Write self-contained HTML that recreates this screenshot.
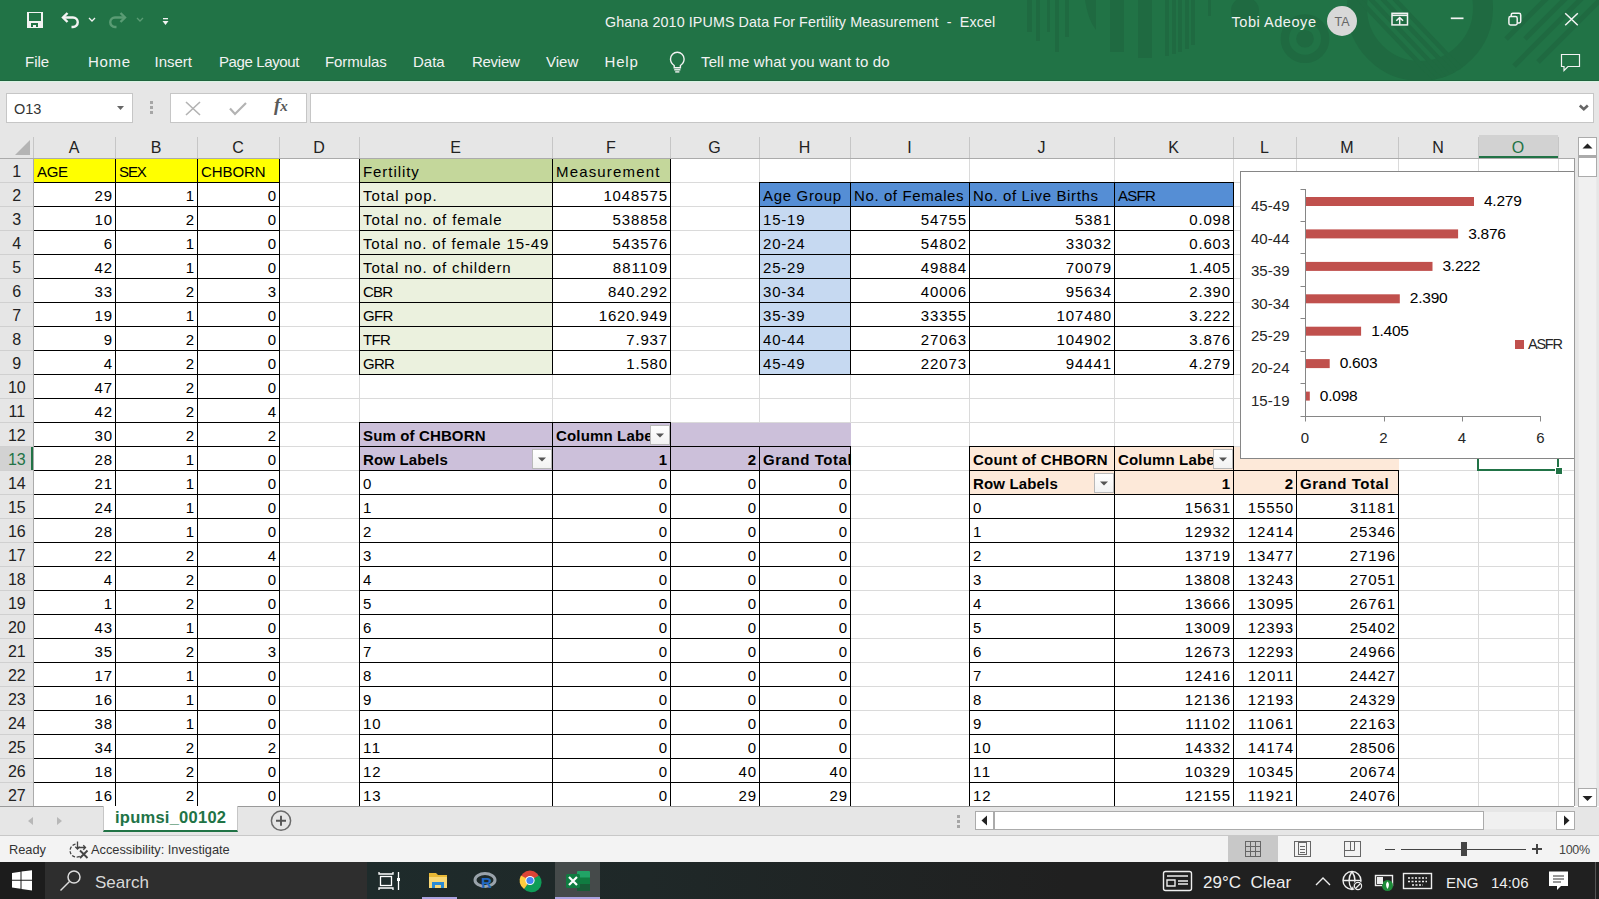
<!DOCTYPE html>
<html><head><meta charset="utf-8"><style>
html,body{margin:0;padding:0;width:1599px;height:899px;overflow:hidden;background:#fff;font-family:"Liberation Sans", sans-serif}
div,span,svg{position:absolute}
.t{white-space:nowrap}
</style></head><body>
<div style="left:0px;top:0px;width:1599px;height:81px;background:#217346;"></div>
<svg style="position:absolute;left:0;top:0" width="1599" height="81"><g fill="#1f6a41"><rect x="1027" y="0" width="5" height="32"/><rect x="1036" y="0" width="4" height="41"/><rect x="1047" y="0" width="3" height="32"/><rect x="1055" y="0" width="4" height="52"/><rect x="1065" y="0" width="4" height="37"/><path d="M1085 0 L1096 0 L1096 30 Q1088 20 1085 0Z"/><rect x="1110" y="0" width="14" height="52"/><rect x="1138" y="0" width="14" height="58"/><rect x="1165" y="0" width="4" height="56"/><rect x="1172" y="0" width="4" height="54"/><rect x="1178" y="0" width="4" height="52"/><rect x="1185" y="0" width="4" height="49"/><rect x="1191" y="0" width="4" height="45"/><rect x="1208" y="0" width="3" height="16"/><circle cx="1245" cy="11" r="14"/><circle cx="1305" cy="38.7" r="8.8"/></g><defs><clipPath id="bigc"><circle cx="1420" cy="8" r="73"/></clipPath></defs><g fill="none" stroke="#1f6a41"><circle cx="1305" cy="38.7" r="20.2" stroke-width="8.3"/><circle cx="1420" cy="8" r="63" stroke-width="20"/></g><g stroke="#1f6a41" stroke-width="4.5" clip-path="url(#bigc)"><line x1="1350" y1="-10" x2="1440" y2="85"/><line x1="1362" y1="-10" x2="1452" y2="85"/><line x1="1374" y1="-10" x2="1464" y2="85"/><line x1="1386" y1="-10" x2="1476" y2="85"/></g><g stroke="#1f6a41" stroke-width="5" stroke-linecap="butt"><line x1="1506" y1="39" x2="1560" y2="-15"/><line x1="1525" y1="39" x2="1580" y2="-16"/><line x1="1514" y1="66" x2="1600" y2="-20"/><line x1="1538" y1="62" x2="1610" y2="-10"/></g></svg>
<div style="left:0px;top:80px;width:1599px;height:1px;background:#1f633d;"></div>
<div style="left:0px;top:81px;width:1599px;height:1px;background:#d8f3e2;"></div>
<svg style="position:absolute;left:0;top:0" width="200" height="40"><g fill="none" stroke="#f3f3f3" stroke-width="2"></g><path fill-rule="evenodd" fill="#f3f3f3" d="M27 12 H43 V28 H27 Z M29 13 V21 H41 V13 Z M31 23 V27 H33 V25 H36 V27 H38 V23 Z"/><g fill="none" stroke="#f3f3f3" stroke-width="2.4"><path d="M63 17.5 H73 A4.75 4.75 0 0 1 73 27 H71.5"/><path d="M67.5 13 L63 17.5 L67.5 22"/><path d="M89 18 L92 21 L95 18" stroke-width="1.3"/></g><g fill="none" stroke="#5a9c74" stroke-width="2"><path d="M125 17.5 H115 A4.75 4.75 0 0 0 115 27 H116.5" stroke-width="2.4"/><path d="M120.5 13 L125 17.5 L120.5 22" stroke-width="2.4"/><path d="M137 18 L140 21 L143 18" stroke-width="1.3"/></g><rect x="163" y="18" width="5" height="1.3" fill="#f3f3f3"/><path d="M162.5 21 H168.5 L165.5 25 Z" fill="#f3f3f3"/></svg>
<span class="t" style="left:605px;top:13.05px;font-size:14.3px;line-height:18px;color:#f2f2f2;font-weight:normal;letter-spacing:0.1px;">Ghana 2010 IPUMS Data For Fertility Measurement &nbsp;-&nbsp; Excel</span>
<span class="t" style="left:1231.5px;top:12.94px;font-size:14.6px;line-height:18px;color:#f2f2f2;font-weight:normal;letter-spacing:0.5px;">Tobi Adeoye</span>
<div style="left:1327px;top:6px;width:30px;height:30px;border-radius:50%;background:#d8d8d8"></div>
<span class="t" style="left:1042px;width:600px;text-align:center;top:13.67px;font-size:12.5px;line-height:16px;color:#666;font-weight:normal;letter-spacing:0px;">TA</span>
<svg style="position:absolute;left:1380px;top:0" width="219" height="81"><g fill="none" stroke="#f3f3f3" stroke-width="1.2"><rect x="12" y="13.3" width="15.5" height="11.6" stroke-width="1.5"/><line x1="12" y1="15.3" x2="27.5" y2="15.3" stroke-width="1.6"/><path d="M16.3 20.8 L19.7 17.6 L23.1 20.8 M19.7 17.6 V24.5" stroke-width="1.5"/><line x1="70.8" y1="18.3" x2="83.5" y2="18.3" stroke-width="1.7"/><rect x="128.9" y="16.6" width="8.3" height="8.3" rx="1.6" stroke-width="1.5"/><path d="M131.2 16.6 V15 Q131.2 13.3 132.9 13.3 H139 Q140.7 13.3 140.7 15 V21.3 Q140.7 22.9 139.1 22.9 H137.2" stroke-width="1.5"/><path d="M185.2 13.2 L197.8 25.2 M197.8 13.2 L185.2 25.2" stroke-width="1.5"/><path d="M181.5 54.5 H199.5 V66.5 H188 L184 70.5 V66.5 H181.5 Z"/></g></svg>
<span class="t" style="left:25px;top:52.30px;font-size:15px;line-height:19px;color:#f2f2f2;font-weight:normal;letter-spacing:0px;">File</span>
<span class="t" style="left:88px;top:52.30px;font-size:15px;line-height:19px;color:#f2f2f2;font-weight:normal;letter-spacing:0.7px;">Home</span>
<span class="t" style="left:154.5px;top:52.30px;font-size:15px;line-height:19px;color:#f2f2f2;font-weight:normal;letter-spacing:0px;">Insert</span>
<span class="t" style="left:219px;top:52.30px;font-size:15px;line-height:19px;color:#f2f2f2;font-weight:normal;letter-spacing:-0.38px;">Page Layout</span>
<span class="t" style="left:325px;top:52.30px;font-size:15px;line-height:19px;color:#f2f2f2;font-weight:normal;letter-spacing:-0.1px;">Formulas</span>
<span class="t" style="left:413px;top:52.30px;font-size:15px;line-height:19px;color:#f2f2f2;font-weight:normal;letter-spacing:0px;">Data</span>
<span class="t" style="left:472px;top:52.30px;font-size:15px;line-height:19px;color:#f2f2f2;font-weight:normal;letter-spacing:-0.28px;">Review</span>
<span class="t" style="left:546px;top:52.30px;font-size:15px;line-height:19px;color:#f2f2f2;font-weight:normal;letter-spacing:0px;">View</span>
<span class="t" style="left:604.5px;top:52.30px;font-size:15px;line-height:19px;color:#f2f2f2;font-weight:normal;letter-spacing:0.8px;">Help</span>
<svg style="position:absolute;left:660px;top:48px" width="30" height="30"><g fill="none" stroke="#f3f3f3" stroke-width="1.4"><path d="M14.2 17.5 Q10.5 15 10.5 11 A6.8 6.8 0 0 1 24.1 11 Q24.1 15 20.4 17.5 V19.8 H14.2 Z"/><line x1="14.2" y1="21.8" x2="20.4" y2="21.8"/><line x1="15.2" y1="23.9" x2="19.4" y2="23.9"/></g></svg>
<span class="t" style="left:701px;top:52.30px;font-size:15px;line-height:19px;color:#f2f2f2;font-weight:normal;letter-spacing:0.13px;">Tell me what you want to do</span>
<div style="left:0px;top:82px;width:1599px;height:724px;background:#e6e6e6;"></div>
<div style="left:6px;top:93px;width:127px;height:30px;background:#fff;box-sizing:border-box;border:1px solid #c6c6c6"></div>
<span class="t" style="left:14px;top:99.98px;font-size:14.5px;line-height:18px;color:#333;font-weight:normal;letter-spacing:0px;">O13</span>
<svg style="position:absolute;left:110px;top:100px" width="20" height="15"><path d="M7 6 H14 L10.5 10 Z" fill="#666"/></svg>
<div style="left:150px;top:101px;width:3px;height:3px;background:#a6a6a6;"></div>
<div style="left:150px;top:106px;width:3px;height:3px;background:#a6a6a6;"></div>
<div style="left:150px;top:111px;width:3px;height:3px;background:#a6a6a6;"></div>
<div style="left:170px;top:93px;width:137px;height:30px;background:#fff;box-sizing:border-box;border:1px solid #c6c6c6"></div>
<svg style="position:absolute;left:170px;top:93px" width="137" height="30"><g fill="none" stroke="#b3b3b3" stroke-width="1.6"><path d="M16 9 L30 22 M30 9 L16 22"/><path d="M60 15.5 L65 21 L76 10" stroke-width="2.2"/></g></svg>
<span class="t" style="left:274px;top:93.42px;font-size:19px;line-height:24px;color:#595959;font-weight:normal;letter-spacing:0px;font-family:'Liberation Serif',serif;font-weight:bold;"><i>f</i><i style="font-size:15px">x</i></span>
<div style="left:310px;top:93px;width:1284px;height:30px;background:#fff;box-sizing:border-box;border:1px solid #c6c6c6"></div>
<svg style="position:absolute;left:1575px;top:100px" width="18" height="15"><path d="M4.8 5.5 L8.8 9.3 L12.8 5.5" fill="none" stroke="#666" stroke-width="2.6"/></svg>
<div style="left:0px;top:135px;width:1574px;height:23px;background:#e6e6e6;"></div>
<svg style="position:absolute;left:0;top:135px" width="33" height="23"><path d="M30 5 V20 H15 Z" fill="#b4b4b4"/></svg>
<div style="left:33px;top:159px;width:1541px;height:647px;background:#fff;"></div>
<div style="left:0px;top:158px;width:33px;height:648px;background:#e6e6e6;"></div>
<div style="left:1479px;top:135px;width:79px;height:23px;background:#d2d2d2;"></div>
<div style="left:0px;top:447px;width:33px;height:23px;background:#d2d2d2;"></div>
<div style="left:115px;top:159px;width:1px;height:647px;background:#dadada;"></div>
<div style="left:197px;top:159px;width:1px;height:647px;background:#dadada;"></div>
<div style="left:279px;top:159px;width:1px;height:647px;background:#dadada;"></div>
<div style="left:359px;top:159px;width:1px;height:647px;background:#dadada;"></div>
<div style="left:552px;top:159px;width:1px;height:647px;background:#dadada;"></div>
<div style="left:670px;top:159px;width:1px;height:647px;background:#dadada;"></div>
<div style="left:759px;top:159px;width:1px;height:647px;background:#dadada;"></div>
<div style="left:850px;top:159px;width:1px;height:647px;background:#dadada;"></div>
<div style="left:969px;top:159px;width:1px;height:647px;background:#dadada;"></div>
<div style="left:1114px;top:159px;width:1px;height:647px;background:#dadada;"></div>
<div style="left:1233px;top:159px;width:1px;height:647px;background:#dadada;"></div>
<div style="left:1296px;top:159px;width:1px;height:647px;background:#dadada;"></div>
<div style="left:1398px;top:159px;width:1px;height:647px;background:#dadada;"></div>
<div style="left:1478px;top:159px;width:1px;height:647px;background:#dadada;"></div>
<div style="left:1558px;top:159px;width:1px;height:647px;background:#dadada;"></div>
<div style="left:33px;top:182px;width:1541px;height:1px;background:#dadada;"></div>
<div style="left:33px;top:206px;width:1541px;height:1px;background:#dadada;"></div>
<div style="left:33px;top:230px;width:1541px;height:1px;background:#dadada;"></div>
<div style="left:33px;top:254px;width:1541px;height:1px;background:#dadada;"></div>
<div style="left:33px;top:278px;width:1541px;height:1px;background:#dadada;"></div>
<div style="left:33px;top:302px;width:1541px;height:1px;background:#dadada;"></div>
<div style="left:33px;top:326px;width:1541px;height:1px;background:#dadada;"></div>
<div style="left:33px;top:350px;width:1541px;height:1px;background:#dadada;"></div>
<div style="left:33px;top:374px;width:1541px;height:1px;background:#dadada;"></div>
<div style="left:33px;top:398px;width:1541px;height:1px;background:#dadada;"></div>
<div style="left:33px;top:422px;width:1541px;height:1px;background:#dadada;"></div>
<div style="left:33px;top:446px;width:1541px;height:1px;background:#dadada;"></div>
<div style="left:33px;top:470px;width:1541px;height:1px;background:#dadada;"></div>
<div style="left:33px;top:494px;width:1541px;height:1px;background:#dadada;"></div>
<div style="left:33px;top:518px;width:1541px;height:1px;background:#dadada;"></div>
<div style="left:33px;top:542px;width:1541px;height:1px;background:#dadada;"></div>
<div style="left:33px;top:566px;width:1541px;height:1px;background:#dadada;"></div>
<div style="left:33px;top:590px;width:1541px;height:1px;background:#dadada;"></div>
<div style="left:33px;top:614px;width:1541px;height:1px;background:#dadada;"></div>
<div style="left:33px;top:638px;width:1541px;height:1px;background:#dadada;"></div>
<div style="left:33px;top:662px;width:1541px;height:1px;background:#dadada;"></div>
<div style="left:33px;top:686px;width:1541px;height:1px;background:#dadada;"></div>
<div style="left:33px;top:710px;width:1541px;height:1px;background:#dadada;"></div>
<div style="left:33px;top:734px;width:1541px;height:1px;background:#dadada;"></div>
<div style="left:33px;top:758px;width:1541px;height:1px;background:#dadada;"></div>
<div style="left:33px;top:782px;width:1541px;height:1px;background:#dadada;"></div>
<div style="left:33px;top:806px;width:1541px;height:1px;background:#dadada;"></div>
<div style="left:33px;top:137px;width:1px;height:21px;background:#c6c6c6;"></div>
<div style="left:115px;top:137px;width:1px;height:21px;background:#c6c6c6;"></div>
<div style="left:197px;top:137px;width:1px;height:21px;background:#c6c6c6;"></div>
<div style="left:279px;top:137px;width:1px;height:21px;background:#c6c6c6;"></div>
<div style="left:359px;top:137px;width:1px;height:21px;background:#c6c6c6;"></div>
<div style="left:552px;top:137px;width:1px;height:21px;background:#c6c6c6;"></div>
<div style="left:670px;top:137px;width:1px;height:21px;background:#c6c6c6;"></div>
<div style="left:759px;top:137px;width:1px;height:21px;background:#c6c6c6;"></div>
<div style="left:850px;top:137px;width:1px;height:21px;background:#c6c6c6;"></div>
<div style="left:969px;top:137px;width:1px;height:21px;background:#c6c6c6;"></div>
<div style="left:1114px;top:137px;width:1px;height:21px;background:#c6c6c6;"></div>
<div style="left:1233px;top:137px;width:1px;height:21px;background:#c6c6c6;"></div>
<div style="left:1296px;top:137px;width:1px;height:21px;background:#c6c6c6;"></div>
<div style="left:1398px;top:137px;width:1px;height:21px;background:#c6c6c6;"></div>
<div style="left:1478px;top:137px;width:1px;height:21px;background:#c6c6c6;"></div>
<div style="left:1558px;top:137px;width:1px;height:21px;background:#c6c6c6;"></div>
<div style="left:0px;top:182px;width:33px;height:1px;background:#d0d0d0;"></div>
<div style="left:0px;top:206px;width:33px;height:1px;background:#d0d0d0;"></div>
<div style="left:0px;top:230px;width:33px;height:1px;background:#d0d0d0;"></div>
<div style="left:0px;top:254px;width:33px;height:1px;background:#d0d0d0;"></div>
<div style="left:0px;top:278px;width:33px;height:1px;background:#d0d0d0;"></div>
<div style="left:0px;top:302px;width:33px;height:1px;background:#d0d0d0;"></div>
<div style="left:0px;top:326px;width:33px;height:1px;background:#d0d0d0;"></div>
<div style="left:0px;top:350px;width:33px;height:1px;background:#d0d0d0;"></div>
<div style="left:0px;top:374px;width:33px;height:1px;background:#d0d0d0;"></div>
<div style="left:0px;top:398px;width:33px;height:1px;background:#d0d0d0;"></div>
<div style="left:0px;top:422px;width:33px;height:1px;background:#d0d0d0;"></div>
<div style="left:0px;top:446px;width:33px;height:1px;background:#d0d0d0;"></div>
<div style="left:0px;top:470px;width:33px;height:1px;background:#d0d0d0;"></div>
<div style="left:0px;top:494px;width:33px;height:1px;background:#d0d0d0;"></div>
<div style="left:0px;top:518px;width:33px;height:1px;background:#d0d0d0;"></div>
<div style="left:0px;top:542px;width:33px;height:1px;background:#d0d0d0;"></div>
<div style="left:0px;top:566px;width:33px;height:1px;background:#d0d0d0;"></div>
<div style="left:0px;top:590px;width:33px;height:1px;background:#d0d0d0;"></div>
<div style="left:0px;top:614px;width:33px;height:1px;background:#d0d0d0;"></div>
<div style="left:0px;top:638px;width:33px;height:1px;background:#d0d0d0;"></div>
<div style="left:0px;top:662px;width:33px;height:1px;background:#d0d0d0;"></div>
<div style="left:0px;top:686px;width:33px;height:1px;background:#d0d0d0;"></div>
<div style="left:0px;top:710px;width:33px;height:1px;background:#d0d0d0;"></div>
<div style="left:0px;top:734px;width:33px;height:1px;background:#d0d0d0;"></div>
<div style="left:0px;top:758px;width:33px;height:1px;background:#d0d0d0;"></div>
<div style="left:0px;top:782px;width:33px;height:1px;background:#d0d0d0;"></div>
<div style="left:0px;top:806px;width:33px;height:1px;background:#d0d0d0;"></div>
<span class="t" style="left:-226.0px;width:600px;text-align:center;top:138.26px;font-size:16px;line-height:20px;color:#222;font-weight:normal;letter-spacing:0px;">A</span>
<span class="t" style="left:-144.0px;width:600px;text-align:center;top:138.26px;font-size:16px;line-height:20px;color:#222;font-weight:normal;letter-spacing:0px;">B</span>
<span class="t" style="left:-62.0px;width:600px;text-align:center;top:138.26px;font-size:16px;line-height:20px;color:#222;font-weight:normal;letter-spacing:0px;">C</span>
<span class="t" style="left:19.0px;width:600px;text-align:center;top:138.26px;font-size:16px;line-height:20px;color:#222;font-weight:normal;letter-spacing:0px;">D</span>
<span class="t" style="left:155.5px;width:600px;text-align:center;top:138.26px;font-size:16px;line-height:20px;color:#222;font-weight:normal;letter-spacing:0px;">E</span>
<span class="t" style="left:311.0px;width:600px;text-align:center;top:138.26px;font-size:16px;line-height:20px;color:#222;font-weight:normal;letter-spacing:0px;">F</span>
<span class="t" style="left:414.5px;width:600px;text-align:center;top:138.26px;font-size:16px;line-height:20px;color:#222;font-weight:normal;letter-spacing:0px;">G</span>
<span class="t" style="left:504.5px;width:600px;text-align:center;top:138.26px;font-size:16px;line-height:20px;color:#222;font-weight:normal;letter-spacing:0px;">H</span>
<span class="t" style="left:609.5px;width:600px;text-align:center;top:138.26px;font-size:16px;line-height:20px;color:#222;font-weight:normal;letter-spacing:0px;">I</span>
<span class="t" style="left:741.5px;width:600px;text-align:center;top:138.26px;font-size:16px;line-height:20px;color:#222;font-weight:normal;letter-spacing:0px;">J</span>
<span class="t" style="left:873.5px;width:600px;text-align:center;top:138.26px;font-size:16px;line-height:20px;color:#222;font-weight:normal;letter-spacing:0px;">K</span>
<span class="t" style="left:964.5px;width:600px;text-align:center;top:138.26px;font-size:16px;line-height:20px;color:#222;font-weight:normal;letter-spacing:0px;">L</span>
<span class="t" style="left:1047.0px;width:600px;text-align:center;top:138.26px;font-size:16px;line-height:20px;color:#222;font-weight:normal;letter-spacing:0px;">M</span>
<span class="t" style="left:1138.0px;width:600px;text-align:center;top:138.26px;font-size:16px;line-height:20px;color:#222;font-weight:normal;letter-spacing:0px;">N</span>
<span class="t" style="left:1218.0px;width:600px;text-align:center;top:138.26px;font-size:16px;line-height:20px;color:#217346;font-weight:normal;letter-spacing:0px;">O</span>
<span class="t" style="left:-283.2px;width:600px;text-align:center;top:162.26px;font-size:16px;line-height:20px;color:#222;font-weight:normal;letter-spacing:0px;">1</span>
<span class="t" style="left:-283.2px;width:600px;text-align:center;top:186.26px;font-size:16px;line-height:20px;color:#222;font-weight:normal;letter-spacing:0px;">2</span>
<span class="t" style="left:-283.2px;width:600px;text-align:center;top:210.26px;font-size:16px;line-height:20px;color:#222;font-weight:normal;letter-spacing:0px;">3</span>
<span class="t" style="left:-283.2px;width:600px;text-align:center;top:234.26px;font-size:16px;line-height:20px;color:#222;font-weight:normal;letter-spacing:0px;">4</span>
<span class="t" style="left:-283.2px;width:600px;text-align:center;top:258.26px;font-size:16px;line-height:20px;color:#222;font-weight:normal;letter-spacing:0px;">5</span>
<span class="t" style="left:-283.2px;width:600px;text-align:center;top:282.26px;font-size:16px;line-height:20px;color:#222;font-weight:normal;letter-spacing:0px;">6</span>
<span class="t" style="left:-283.2px;width:600px;text-align:center;top:306.26px;font-size:16px;line-height:20px;color:#222;font-weight:normal;letter-spacing:0px;">7</span>
<span class="t" style="left:-283.2px;width:600px;text-align:center;top:330.26px;font-size:16px;line-height:20px;color:#222;font-weight:normal;letter-spacing:0px;">8</span>
<span class="t" style="left:-283.2px;width:600px;text-align:center;top:354.26px;font-size:16px;line-height:20px;color:#222;font-weight:normal;letter-spacing:0px;">9</span>
<span class="t" style="left:-283.2px;width:600px;text-align:center;top:378.26px;font-size:16px;line-height:20px;color:#222;font-weight:normal;letter-spacing:0px;">10</span>
<span class="t" style="left:-283.2px;width:600px;text-align:center;top:402.26px;font-size:16px;line-height:20px;color:#222;font-weight:normal;letter-spacing:0px;">11</span>
<span class="t" style="left:-283.2px;width:600px;text-align:center;top:426.26px;font-size:16px;line-height:20px;color:#222;font-weight:normal;letter-spacing:0px;">12</span>
<span class="t" style="left:-283.2px;width:600px;text-align:center;top:450.26px;font-size:16px;line-height:20px;color:#217346;font-weight:normal;letter-spacing:0px;">13</span>
<span class="t" style="left:-283.2px;width:600px;text-align:center;top:474.26px;font-size:16px;line-height:20px;color:#222;font-weight:normal;letter-spacing:0px;">14</span>
<span class="t" style="left:-283.2px;width:600px;text-align:center;top:498.26px;font-size:16px;line-height:20px;color:#222;font-weight:normal;letter-spacing:0px;">15</span>
<span class="t" style="left:-283.2px;width:600px;text-align:center;top:522.26px;font-size:16px;line-height:20px;color:#222;font-weight:normal;letter-spacing:0px;">16</span>
<span class="t" style="left:-283.2px;width:600px;text-align:center;top:546.26px;font-size:16px;line-height:20px;color:#222;font-weight:normal;letter-spacing:0px;">17</span>
<span class="t" style="left:-283.2px;width:600px;text-align:center;top:570.26px;font-size:16px;line-height:20px;color:#222;font-weight:normal;letter-spacing:0px;">18</span>
<span class="t" style="left:-283.2px;width:600px;text-align:center;top:594.26px;font-size:16px;line-height:20px;color:#222;font-weight:normal;letter-spacing:0px;">19</span>
<span class="t" style="left:-283.2px;width:600px;text-align:center;top:618.26px;font-size:16px;line-height:20px;color:#222;font-weight:normal;letter-spacing:0px;">20</span>
<span class="t" style="left:-283.2px;width:600px;text-align:center;top:642.26px;font-size:16px;line-height:20px;color:#222;font-weight:normal;letter-spacing:0px;">21</span>
<span class="t" style="left:-283.2px;width:600px;text-align:center;top:666.26px;font-size:16px;line-height:20px;color:#222;font-weight:normal;letter-spacing:0px;">22</span>
<span class="t" style="left:-283.2px;width:600px;text-align:center;top:690.26px;font-size:16px;line-height:20px;color:#222;font-weight:normal;letter-spacing:0px;">23</span>
<span class="t" style="left:-283.2px;width:600px;text-align:center;top:714.26px;font-size:16px;line-height:20px;color:#222;font-weight:normal;letter-spacing:0px;">24</span>
<span class="t" style="left:-283.2px;width:600px;text-align:center;top:738.26px;font-size:16px;line-height:20px;color:#222;font-weight:normal;letter-spacing:0px;">25</span>
<span class="t" style="left:-283.2px;width:600px;text-align:center;top:762.26px;font-size:16px;line-height:20px;color:#222;font-weight:normal;letter-spacing:0px;">26</span>
<span class="t" style="left:-283.2px;width:600px;text-align:center;top:786.26px;font-size:16px;line-height:20px;color:#222;font-weight:normal;letter-spacing:0px;">27</span>
<div style="left:34px;top:159px;width:246px;height:24px;background:#ffff00;"></div>
<div style="left:360px;top:159px;width:311px;height:24px;background:#c4d79b;"></div>
<div style="left:360px;top:183px;width:193px;height:192px;background:#ebf1de;"></div>
<div style="left:760px;top:183px;width:474px;height:24px;background:#558ed5;"></div>
<div style="left:760px;top:207px;width:91px;height:168px;background:#c6d9f1;"></div>
<div style="left:360px;top:423px;width:491px;height:48px;background:#ccc0da;"></div>
<div style="left:970px;top:447px;width:429px;height:48px;background:#fde9d9;"></div>
<div style="left:33px;top:158px;width:1px;height:649px;background:#000;"></div>
<div style="left:115px;top:158px;width:1px;height:649px;background:#000;"></div>
<div style="left:197px;top:158px;width:1px;height:649px;background:#000;"></div>
<div style="left:279px;top:158px;width:1px;height:649px;background:#000;"></div>
<div style="left:33px;top:158px;width:247px;height:1px;background:#000;"></div>
<div style="left:33px;top:182px;width:247px;height:1px;background:#000;"></div>
<div style="left:33px;top:206px;width:247px;height:1px;background:#000;"></div>
<div style="left:33px;top:230px;width:247px;height:1px;background:#000;"></div>
<div style="left:33px;top:254px;width:247px;height:1px;background:#000;"></div>
<div style="left:33px;top:278px;width:247px;height:1px;background:#000;"></div>
<div style="left:33px;top:302px;width:247px;height:1px;background:#000;"></div>
<div style="left:33px;top:326px;width:247px;height:1px;background:#000;"></div>
<div style="left:33px;top:350px;width:247px;height:1px;background:#000;"></div>
<div style="left:33px;top:374px;width:247px;height:1px;background:#000;"></div>
<div style="left:33px;top:398px;width:247px;height:1px;background:#000;"></div>
<div style="left:33px;top:422px;width:247px;height:1px;background:#000;"></div>
<div style="left:33px;top:446px;width:247px;height:1px;background:#000;"></div>
<div style="left:33px;top:470px;width:247px;height:1px;background:#000;"></div>
<div style="left:33px;top:494px;width:247px;height:1px;background:#000;"></div>
<div style="left:33px;top:518px;width:247px;height:1px;background:#000;"></div>
<div style="left:33px;top:542px;width:247px;height:1px;background:#000;"></div>
<div style="left:33px;top:566px;width:247px;height:1px;background:#000;"></div>
<div style="left:33px;top:590px;width:247px;height:1px;background:#000;"></div>
<div style="left:33px;top:614px;width:247px;height:1px;background:#000;"></div>
<div style="left:33px;top:638px;width:247px;height:1px;background:#000;"></div>
<div style="left:33px;top:662px;width:247px;height:1px;background:#000;"></div>
<div style="left:33px;top:686px;width:247px;height:1px;background:#000;"></div>
<div style="left:33px;top:710px;width:247px;height:1px;background:#000;"></div>
<div style="left:33px;top:734px;width:247px;height:1px;background:#000;"></div>
<div style="left:33px;top:758px;width:247px;height:1px;background:#000;"></div>
<div style="left:33px;top:782px;width:247px;height:1px;background:#000;"></div>
<div style="left:33px;top:806px;width:247px;height:1px;background:#000;"></div>
<div style="left:359px;top:158px;width:1px;height:217px;background:#000;"></div>
<div style="left:552px;top:158px;width:1px;height:217px;background:#000;"></div>
<div style="left:670px;top:158px;width:1px;height:217px;background:#000;"></div>
<div style="left:359px;top:158px;width:312px;height:1px;background:#000;"></div>
<div style="left:359px;top:182px;width:312px;height:1px;background:#000;"></div>
<div style="left:359px;top:206px;width:312px;height:1px;background:#000;"></div>
<div style="left:359px;top:230px;width:312px;height:1px;background:#000;"></div>
<div style="left:359px;top:254px;width:312px;height:1px;background:#000;"></div>
<div style="left:359px;top:278px;width:312px;height:1px;background:#000;"></div>
<div style="left:359px;top:302px;width:312px;height:1px;background:#000;"></div>
<div style="left:359px;top:326px;width:312px;height:1px;background:#000;"></div>
<div style="left:359px;top:350px;width:312px;height:1px;background:#000;"></div>
<div style="left:359px;top:374px;width:312px;height:1px;background:#000;"></div>
<div style="left:759px;top:182px;width:1px;height:193px;background:#000;"></div>
<div style="left:850px;top:182px;width:1px;height:193px;background:#000;"></div>
<div style="left:969px;top:182px;width:1px;height:193px;background:#000;"></div>
<div style="left:1114px;top:182px;width:1px;height:193px;background:#000;"></div>
<div style="left:1233px;top:182px;width:1px;height:193px;background:#000;"></div>
<div style="left:759px;top:182px;width:475px;height:1px;background:#000;"></div>
<div style="left:759px;top:206px;width:475px;height:1px;background:#000;"></div>
<div style="left:759px;top:230px;width:475px;height:1px;background:#000;"></div>
<div style="left:759px;top:254px;width:475px;height:1px;background:#000;"></div>
<div style="left:759px;top:278px;width:475px;height:1px;background:#000;"></div>
<div style="left:759px;top:302px;width:475px;height:1px;background:#000;"></div>
<div style="left:759px;top:326px;width:475px;height:1px;background:#000;"></div>
<div style="left:759px;top:350px;width:475px;height:1px;background:#000;"></div>
<div style="left:759px;top:374px;width:475px;height:1px;background:#000;"></div>
<div style="left:359px;top:422px;width:1px;height:25px;background:#000;"></div>
<div style="left:552px;top:422px;width:1px;height:25px;background:#000;"></div>
<div style="left:670px;top:422px;width:1px;height:25px;background:#000;"></div>
<div style="left:359px;top:422px;width:312px;height:1px;background:#000;"></div>
<div style="left:359px;top:446px;width:312px;height:1px;background:#000;"></div>
<div style="left:359px;top:446px;width:1px;height:361px;background:#000;"></div>
<div style="left:552px;top:446px;width:1px;height:361px;background:#000;"></div>
<div style="left:670px;top:446px;width:1px;height:361px;background:#000;"></div>
<div style="left:759px;top:446px;width:1px;height:361px;background:#000;"></div>
<div style="left:850px;top:446px;width:1px;height:361px;background:#000;"></div>
<div style="left:359px;top:446px;width:492px;height:1px;background:#000;"></div>
<div style="left:359px;top:470px;width:492px;height:1px;background:#000;"></div>
<div style="left:359px;top:494px;width:492px;height:1px;background:#000;"></div>
<div style="left:359px;top:518px;width:492px;height:1px;background:#000;"></div>
<div style="left:359px;top:542px;width:492px;height:1px;background:#000;"></div>
<div style="left:359px;top:566px;width:492px;height:1px;background:#000;"></div>
<div style="left:359px;top:590px;width:492px;height:1px;background:#000;"></div>
<div style="left:359px;top:614px;width:492px;height:1px;background:#000;"></div>
<div style="left:359px;top:638px;width:492px;height:1px;background:#000;"></div>
<div style="left:359px;top:662px;width:492px;height:1px;background:#000;"></div>
<div style="left:359px;top:686px;width:492px;height:1px;background:#000;"></div>
<div style="left:359px;top:710px;width:492px;height:1px;background:#000;"></div>
<div style="left:359px;top:734px;width:492px;height:1px;background:#000;"></div>
<div style="left:359px;top:758px;width:492px;height:1px;background:#000;"></div>
<div style="left:359px;top:782px;width:492px;height:1px;background:#000;"></div>
<div style="left:359px;top:806px;width:492px;height:1px;background:#000;"></div>
<div style="left:969px;top:446px;width:1px;height:25px;background:#000;"></div>
<div style="left:1114px;top:446px;width:1px;height:25px;background:#000;"></div>
<div style="left:1233px;top:446px;width:1px;height:25px;background:#000;"></div>
<div style="left:969px;top:446px;width:265px;height:1px;background:#000;"></div>
<div style="left:969px;top:470px;width:265px;height:1px;background:#000;"></div>
<div style="left:969px;top:470px;width:1px;height:337px;background:#000;"></div>
<div style="left:1114px;top:470px;width:1px;height:337px;background:#000;"></div>
<div style="left:1233px;top:470px;width:1px;height:337px;background:#000;"></div>
<div style="left:1296px;top:470px;width:1px;height:337px;background:#000;"></div>
<div style="left:1398px;top:470px;width:1px;height:337px;background:#000;"></div>
<div style="left:969px;top:470px;width:430px;height:1px;background:#000;"></div>
<div style="left:969px;top:494px;width:430px;height:1px;background:#000;"></div>
<div style="left:969px;top:518px;width:430px;height:1px;background:#000;"></div>
<div style="left:969px;top:542px;width:430px;height:1px;background:#000;"></div>
<div style="left:969px;top:566px;width:430px;height:1px;background:#000;"></div>
<div style="left:969px;top:590px;width:430px;height:1px;background:#000;"></div>
<div style="left:969px;top:614px;width:430px;height:1px;background:#000;"></div>
<div style="left:969px;top:638px;width:430px;height:1px;background:#000;"></div>
<div style="left:969px;top:662px;width:430px;height:1px;background:#000;"></div>
<div style="left:969px;top:686px;width:430px;height:1px;background:#000;"></div>
<div style="left:969px;top:710px;width:430px;height:1px;background:#000;"></div>
<div style="left:969px;top:734px;width:430px;height:1px;background:#000;"></div>
<div style="left:969px;top:758px;width:430px;height:1px;background:#000;"></div>
<div style="left:969px;top:782px;width:430px;height:1px;background:#000;"></div>
<div style="left:969px;top:806px;width:430px;height:1px;background:#000;"></div>
<div style="left:0px;top:158px;width:1574px;height:1px;background:#ababab;"></div>
<div style="left:33px;top:158px;width:1px;height:648px;background:#ababab;"></div>
<div style="left:1479px;top:156px;width:79px;height:2px;background:#217346;"></div>
<div style="left:31px;top:447px;width:2px;height:23px;background:#217346;"></div>
<span class="t" style="left:37px;top:159px;width:77px;overflow:hidden;height:23px;font-size:15px;line-height:23px;font-weight:normal;letter-spacing:-0.275px;white-space:nowrap;padding-top:1px">AGE</span>
<span class="t" style="left:119px;top:159px;width:77px;overflow:hidden;height:23px;font-size:15px;line-height:23px;font-weight:normal;letter-spacing:-1.126px;white-space:nowrap;padding-top:1px">SEX</span>
<span class="t" style="left:201px;top:159px;height:23px;font-size:15px;line-height:23px;font-weight:normal;letter-spacing:-0.08px;white-space:nowrap;padding-top:1px">CHBORN</span>
<span class="t" style="right:1486.13px;top:183px;height:23px;font-size:15px;line-height:23px;font-weight:normal;letter-spacing:0.87px;white-space:nowrap;padding-top:1px">29</span>
<span class="t" style="right:1404.13px;top:183px;height:23px;font-size:15px;line-height:23px;font-weight:normal;letter-spacing:0.87px;white-space:nowrap;padding-top:1px">1</span>
<span class="t" style="right:1322.13px;top:183px;height:23px;font-size:15px;line-height:23px;font-weight:normal;letter-spacing:0.87px;white-space:nowrap;padding-top:1px">0</span>
<span class="t" style="right:1486.13px;top:207px;height:23px;font-size:15px;line-height:23px;font-weight:normal;letter-spacing:0.87px;white-space:nowrap;padding-top:1px">10</span>
<span class="t" style="right:1404.13px;top:207px;height:23px;font-size:15px;line-height:23px;font-weight:normal;letter-spacing:0.87px;white-space:nowrap;padding-top:1px">2</span>
<span class="t" style="right:1322.13px;top:207px;height:23px;font-size:15px;line-height:23px;font-weight:normal;letter-spacing:0.87px;white-space:nowrap;padding-top:1px">0</span>
<span class="t" style="right:1486.13px;top:231px;height:23px;font-size:15px;line-height:23px;font-weight:normal;letter-spacing:0.87px;white-space:nowrap;padding-top:1px">6</span>
<span class="t" style="right:1404.13px;top:231px;height:23px;font-size:15px;line-height:23px;font-weight:normal;letter-spacing:0.87px;white-space:nowrap;padding-top:1px">1</span>
<span class="t" style="right:1322.13px;top:231px;height:23px;font-size:15px;line-height:23px;font-weight:normal;letter-spacing:0.87px;white-space:nowrap;padding-top:1px">0</span>
<span class="t" style="right:1486.13px;top:255px;height:23px;font-size:15px;line-height:23px;font-weight:normal;letter-spacing:0.87px;white-space:nowrap;padding-top:1px">42</span>
<span class="t" style="right:1404.13px;top:255px;height:23px;font-size:15px;line-height:23px;font-weight:normal;letter-spacing:0.87px;white-space:nowrap;padding-top:1px">1</span>
<span class="t" style="right:1322.13px;top:255px;height:23px;font-size:15px;line-height:23px;font-weight:normal;letter-spacing:0.87px;white-space:nowrap;padding-top:1px">0</span>
<span class="t" style="right:1486.13px;top:279px;height:23px;font-size:15px;line-height:23px;font-weight:normal;letter-spacing:0.87px;white-space:nowrap;padding-top:1px">33</span>
<span class="t" style="right:1404.13px;top:279px;height:23px;font-size:15px;line-height:23px;font-weight:normal;letter-spacing:0.87px;white-space:nowrap;padding-top:1px">2</span>
<span class="t" style="right:1322.13px;top:279px;height:23px;font-size:15px;line-height:23px;font-weight:normal;letter-spacing:0.87px;white-space:nowrap;padding-top:1px">3</span>
<span class="t" style="right:1486.13px;top:303px;height:23px;font-size:15px;line-height:23px;font-weight:normal;letter-spacing:0.87px;white-space:nowrap;padding-top:1px">19</span>
<span class="t" style="right:1404.13px;top:303px;height:23px;font-size:15px;line-height:23px;font-weight:normal;letter-spacing:0.87px;white-space:nowrap;padding-top:1px">1</span>
<span class="t" style="right:1322.13px;top:303px;height:23px;font-size:15px;line-height:23px;font-weight:normal;letter-spacing:0.87px;white-space:nowrap;padding-top:1px">0</span>
<span class="t" style="right:1486.13px;top:327px;height:23px;font-size:15px;line-height:23px;font-weight:normal;letter-spacing:0.87px;white-space:nowrap;padding-top:1px">9</span>
<span class="t" style="right:1404.13px;top:327px;height:23px;font-size:15px;line-height:23px;font-weight:normal;letter-spacing:0.87px;white-space:nowrap;padding-top:1px">2</span>
<span class="t" style="right:1322.13px;top:327px;height:23px;font-size:15px;line-height:23px;font-weight:normal;letter-spacing:0.87px;white-space:nowrap;padding-top:1px">0</span>
<span class="t" style="right:1486.13px;top:351px;height:23px;font-size:15px;line-height:23px;font-weight:normal;letter-spacing:0.87px;white-space:nowrap;padding-top:1px">4</span>
<span class="t" style="right:1404.13px;top:351px;height:23px;font-size:15px;line-height:23px;font-weight:normal;letter-spacing:0.87px;white-space:nowrap;padding-top:1px">2</span>
<span class="t" style="right:1322.13px;top:351px;height:23px;font-size:15px;line-height:23px;font-weight:normal;letter-spacing:0.87px;white-space:nowrap;padding-top:1px">0</span>
<span class="t" style="right:1486.13px;top:375px;height:23px;font-size:15px;line-height:23px;font-weight:normal;letter-spacing:0.87px;white-space:nowrap;padding-top:1px">47</span>
<span class="t" style="right:1404.13px;top:375px;height:23px;font-size:15px;line-height:23px;font-weight:normal;letter-spacing:0.87px;white-space:nowrap;padding-top:1px">2</span>
<span class="t" style="right:1322.13px;top:375px;height:23px;font-size:15px;line-height:23px;font-weight:normal;letter-spacing:0.87px;white-space:nowrap;padding-top:1px">0</span>
<span class="t" style="right:1486.13px;top:399px;height:23px;font-size:15px;line-height:23px;font-weight:normal;letter-spacing:0.87px;white-space:nowrap;padding-top:1px">42</span>
<span class="t" style="right:1404.13px;top:399px;height:23px;font-size:15px;line-height:23px;font-weight:normal;letter-spacing:0.87px;white-space:nowrap;padding-top:1px">2</span>
<span class="t" style="right:1322.13px;top:399px;height:23px;font-size:15px;line-height:23px;font-weight:normal;letter-spacing:0.87px;white-space:nowrap;padding-top:1px">4</span>
<span class="t" style="right:1486.13px;top:423px;height:23px;font-size:15px;line-height:23px;font-weight:normal;letter-spacing:0.87px;white-space:nowrap;padding-top:1px">30</span>
<span class="t" style="right:1404.13px;top:423px;height:23px;font-size:15px;line-height:23px;font-weight:normal;letter-spacing:0.87px;white-space:nowrap;padding-top:1px">2</span>
<span class="t" style="right:1322.13px;top:423px;height:23px;font-size:15px;line-height:23px;font-weight:normal;letter-spacing:0.87px;white-space:nowrap;padding-top:1px">2</span>
<span class="t" style="right:1486.13px;top:447px;height:23px;font-size:15px;line-height:23px;font-weight:normal;letter-spacing:0.87px;white-space:nowrap;padding-top:1px">28</span>
<span class="t" style="right:1404.13px;top:447px;height:23px;font-size:15px;line-height:23px;font-weight:normal;letter-spacing:0.87px;white-space:nowrap;padding-top:1px">1</span>
<span class="t" style="right:1322.13px;top:447px;height:23px;font-size:15px;line-height:23px;font-weight:normal;letter-spacing:0.87px;white-space:nowrap;padding-top:1px">0</span>
<span class="t" style="right:1486.13px;top:471px;height:23px;font-size:15px;line-height:23px;font-weight:normal;letter-spacing:0.87px;white-space:nowrap;padding-top:1px">21</span>
<span class="t" style="right:1404.13px;top:471px;height:23px;font-size:15px;line-height:23px;font-weight:normal;letter-spacing:0.87px;white-space:nowrap;padding-top:1px">1</span>
<span class="t" style="right:1322.13px;top:471px;height:23px;font-size:15px;line-height:23px;font-weight:normal;letter-spacing:0.87px;white-space:nowrap;padding-top:1px">0</span>
<span class="t" style="right:1486.13px;top:495px;height:23px;font-size:15px;line-height:23px;font-weight:normal;letter-spacing:0.87px;white-space:nowrap;padding-top:1px">24</span>
<span class="t" style="right:1404.13px;top:495px;height:23px;font-size:15px;line-height:23px;font-weight:normal;letter-spacing:0.87px;white-space:nowrap;padding-top:1px">1</span>
<span class="t" style="right:1322.13px;top:495px;height:23px;font-size:15px;line-height:23px;font-weight:normal;letter-spacing:0.87px;white-space:nowrap;padding-top:1px">0</span>
<span class="t" style="right:1486.13px;top:519px;height:23px;font-size:15px;line-height:23px;font-weight:normal;letter-spacing:0.87px;white-space:nowrap;padding-top:1px">28</span>
<span class="t" style="right:1404.13px;top:519px;height:23px;font-size:15px;line-height:23px;font-weight:normal;letter-spacing:0.87px;white-space:nowrap;padding-top:1px">1</span>
<span class="t" style="right:1322.13px;top:519px;height:23px;font-size:15px;line-height:23px;font-weight:normal;letter-spacing:0.87px;white-space:nowrap;padding-top:1px">0</span>
<span class="t" style="right:1486.13px;top:543px;height:23px;font-size:15px;line-height:23px;font-weight:normal;letter-spacing:0.87px;white-space:nowrap;padding-top:1px">22</span>
<span class="t" style="right:1404.13px;top:543px;height:23px;font-size:15px;line-height:23px;font-weight:normal;letter-spacing:0.87px;white-space:nowrap;padding-top:1px">2</span>
<span class="t" style="right:1322.13px;top:543px;height:23px;font-size:15px;line-height:23px;font-weight:normal;letter-spacing:0.87px;white-space:nowrap;padding-top:1px">4</span>
<span class="t" style="right:1486.13px;top:567px;height:23px;font-size:15px;line-height:23px;font-weight:normal;letter-spacing:0.87px;white-space:nowrap;padding-top:1px">4</span>
<span class="t" style="right:1404.13px;top:567px;height:23px;font-size:15px;line-height:23px;font-weight:normal;letter-spacing:0.87px;white-space:nowrap;padding-top:1px">2</span>
<span class="t" style="right:1322.13px;top:567px;height:23px;font-size:15px;line-height:23px;font-weight:normal;letter-spacing:0.87px;white-space:nowrap;padding-top:1px">0</span>
<span class="t" style="right:1486.13px;top:591px;height:23px;font-size:15px;line-height:23px;font-weight:normal;letter-spacing:0.87px;white-space:nowrap;padding-top:1px">1</span>
<span class="t" style="right:1404.13px;top:591px;height:23px;font-size:15px;line-height:23px;font-weight:normal;letter-spacing:0.87px;white-space:nowrap;padding-top:1px">2</span>
<span class="t" style="right:1322.13px;top:591px;height:23px;font-size:15px;line-height:23px;font-weight:normal;letter-spacing:0.87px;white-space:nowrap;padding-top:1px">0</span>
<span class="t" style="right:1486.13px;top:615px;height:23px;font-size:15px;line-height:23px;font-weight:normal;letter-spacing:0.87px;white-space:nowrap;padding-top:1px">43</span>
<span class="t" style="right:1404.13px;top:615px;height:23px;font-size:15px;line-height:23px;font-weight:normal;letter-spacing:0.87px;white-space:nowrap;padding-top:1px">1</span>
<span class="t" style="right:1322.13px;top:615px;height:23px;font-size:15px;line-height:23px;font-weight:normal;letter-spacing:0.87px;white-space:nowrap;padding-top:1px">0</span>
<span class="t" style="right:1486.13px;top:639px;height:23px;font-size:15px;line-height:23px;font-weight:normal;letter-spacing:0.87px;white-space:nowrap;padding-top:1px">35</span>
<span class="t" style="right:1404.13px;top:639px;height:23px;font-size:15px;line-height:23px;font-weight:normal;letter-spacing:0.87px;white-space:nowrap;padding-top:1px">2</span>
<span class="t" style="right:1322.13px;top:639px;height:23px;font-size:15px;line-height:23px;font-weight:normal;letter-spacing:0.87px;white-space:nowrap;padding-top:1px">3</span>
<span class="t" style="right:1486.13px;top:663px;height:23px;font-size:15px;line-height:23px;font-weight:normal;letter-spacing:0.87px;white-space:nowrap;padding-top:1px">17</span>
<span class="t" style="right:1404.13px;top:663px;height:23px;font-size:15px;line-height:23px;font-weight:normal;letter-spacing:0.87px;white-space:nowrap;padding-top:1px">1</span>
<span class="t" style="right:1322.13px;top:663px;height:23px;font-size:15px;line-height:23px;font-weight:normal;letter-spacing:0.87px;white-space:nowrap;padding-top:1px">0</span>
<span class="t" style="right:1486.13px;top:687px;height:23px;font-size:15px;line-height:23px;font-weight:normal;letter-spacing:0.87px;white-space:nowrap;padding-top:1px">16</span>
<span class="t" style="right:1404.13px;top:687px;height:23px;font-size:15px;line-height:23px;font-weight:normal;letter-spacing:0.87px;white-space:nowrap;padding-top:1px">1</span>
<span class="t" style="right:1322.13px;top:687px;height:23px;font-size:15px;line-height:23px;font-weight:normal;letter-spacing:0.87px;white-space:nowrap;padding-top:1px">0</span>
<span class="t" style="right:1486.13px;top:711px;height:23px;font-size:15px;line-height:23px;font-weight:normal;letter-spacing:0.87px;white-space:nowrap;padding-top:1px">38</span>
<span class="t" style="right:1404.13px;top:711px;height:23px;font-size:15px;line-height:23px;font-weight:normal;letter-spacing:0.87px;white-space:nowrap;padding-top:1px">1</span>
<span class="t" style="right:1322.13px;top:711px;height:23px;font-size:15px;line-height:23px;font-weight:normal;letter-spacing:0.87px;white-space:nowrap;padding-top:1px">0</span>
<span class="t" style="right:1486.13px;top:735px;height:23px;font-size:15px;line-height:23px;font-weight:normal;letter-spacing:0.87px;white-space:nowrap;padding-top:1px">34</span>
<span class="t" style="right:1404.13px;top:735px;height:23px;font-size:15px;line-height:23px;font-weight:normal;letter-spacing:0.87px;white-space:nowrap;padding-top:1px">2</span>
<span class="t" style="right:1322.13px;top:735px;height:23px;font-size:15px;line-height:23px;font-weight:normal;letter-spacing:0.87px;white-space:nowrap;padding-top:1px">2</span>
<span class="t" style="right:1486.13px;top:759px;height:23px;font-size:15px;line-height:23px;font-weight:normal;letter-spacing:0.87px;white-space:nowrap;padding-top:1px">18</span>
<span class="t" style="right:1404.13px;top:759px;height:23px;font-size:15px;line-height:23px;font-weight:normal;letter-spacing:0.87px;white-space:nowrap;padding-top:1px">2</span>
<span class="t" style="right:1322.13px;top:759px;height:23px;font-size:15px;line-height:23px;font-weight:normal;letter-spacing:0.87px;white-space:nowrap;padding-top:1px">0</span>
<span class="t" style="right:1486.13px;top:783px;height:23px;font-size:15px;line-height:23px;font-weight:normal;letter-spacing:0.87px;white-space:nowrap;padding-top:1px">16</span>
<span class="t" style="right:1404.13px;top:783px;height:23px;font-size:15px;line-height:23px;font-weight:normal;letter-spacing:0.87px;white-space:nowrap;padding-top:1px">2</span>
<span class="t" style="right:1322.13px;top:783px;height:23px;font-size:15px;line-height:23px;font-weight:normal;letter-spacing:0.87px;white-space:nowrap;padding-top:1px">0</span>
<span class="t" style="left:363px;top:159px;width:188px;overflow:hidden;height:23px;font-size:15px;line-height:23px;font-weight:normal;letter-spacing:0.927px;white-space:nowrap;padding-top:1px">Fertility</span>
<span class="t" style="left:556px;top:159px;height:23px;font-size:15px;line-height:23px;font-weight:normal;letter-spacing:1.164px;white-space:nowrap;padding-top:1px">Measurement</span>
<span class="t" style="left:363px;top:183px;width:188px;overflow:hidden;height:23px;font-size:15px;line-height:23px;font-weight:normal;letter-spacing:0.969px;white-space:nowrap;padding-top:1px">Total pop.</span>
<span class="t" style="right:931.13px;top:183px;height:23px;font-size:15px;line-height:23px;font-weight:normal;letter-spacing:0.87px;white-space:nowrap;padding-top:1px">1048575</span>
<span class="t" style="left:363px;top:207px;width:188px;overflow:hidden;height:23px;font-size:15px;line-height:23px;font-weight:normal;letter-spacing:0.894px;white-space:nowrap;padding-top:1px">Total no. of female</span>
<span class="t" style="right:931.13px;top:207px;height:23px;font-size:15px;line-height:23px;font-weight:normal;letter-spacing:0.87px;white-space:nowrap;padding-top:1px">538858</span>
<span class="t" style="left:363px;top:231px;width:188px;overflow:hidden;height:23px;font-size:15px;line-height:23px;font-weight:normal;letter-spacing:0.839px;white-space:nowrap;padding-top:1px">Total no. of female 15-49</span>
<span class="t" style="right:931.13px;top:231px;height:23px;font-size:15px;line-height:23px;font-weight:normal;letter-spacing:0.87px;white-space:nowrap;padding-top:1px">543576</span>
<span class="t" style="left:363px;top:255px;width:188px;overflow:hidden;height:23px;font-size:15px;line-height:23px;font-weight:normal;letter-spacing:0.881px;white-space:nowrap;padding-top:1px">Total no. of childern</span>
<span class="t" style="right:930.95px;top:255px;height:23px;font-size:15px;line-height:23px;font-weight:normal;letter-spacing:1.055px;white-space:nowrap;padding-top:1px">881109</span>
<span class="t" style="left:363px;top:279px;width:188px;overflow:hidden;height:23px;font-size:15px;line-height:23px;font-weight:normal;letter-spacing:-0.745px;white-space:nowrap;padding-top:1px">CBR</span>
<span class="t" style="right:931.20px;top:279px;height:23px;font-size:15px;line-height:23px;font-weight:normal;letter-spacing:0.804px;white-space:nowrap;padding-top:1px">840.292</span>
<span class="t" style="left:363px;top:303px;width:188px;overflow:hidden;height:23px;font-size:15px;line-height:23px;font-weight:normal;letter-spacing:-0.664px;white-space:nowrap;padding-top:1px">GFR</span>
<span class="t" style="right:931.19px;top:303px;height:23px;font-size:15px;line-height:23px;font-weight:normal;letter-spacing:0.813px;white-space:nowrap;padding-top:1px">1620.949</span>
<span class="t" style="left:363px;top:327px;width:188px;overflow:hidden;height:23px;font-size:15px;line-height:23px;font-weight:normal;letter-spacing:-0.701px;white-space:nowrap;padding-top:1px">TFR</span>
<span class="t" style="right:931.22px;top:327px;height:23px;font-size:15px;line-height:23px;font-weight:normal;letter-spacing:0.778px;white-space:nowrap;padding-top:1px">7.937</span>
<span class="t" style="left:363px;top:351px;width:188px;overflow:hidden;height:23px;font-size:15px;line-height:23px;font-weight:normal;letter-spacing:-0.712px;white-space:nowrap;padding-top:1px">GRR</span>
<span class="t" style="right:931.22px;top:351px;height:23px;font-size:15px;line-height:23px;font-weight:normal;letter-spacing:0.778px;white-space:nowrap;padding-top:1px">1.580</span>
<span class="t" style="left:763px;top:183px;width:86px;overflow:hidden;height:23px;font-size:15px;line-height:23px;font-weight:normal;letter-spacing:0.683px;white-space:nowrap;padding-top:1px">Age Group</span>
<span class="t" style="left:854px;top:183px;width:114px;overflow:hidden;height:23px;font-size:15px;line-height:23px;font-weight:normal;letter-spacing:0.604px;white-space:nowrap;padding-top:1px">No. of Females</span>
<span class="t" style="left:973px;top:183px;width:140px;overflow:hidden;height:23px;font-size:15px;line-height:23px;font-weight:normal;letter-spacing:0.629px;white-space:nowrap;padding-top:1px">No. of Live Births</span>
<span class="t" style="left:1118px;top:183px;height:23px;font-size:15px;line-height:23px;font-weight:normal;letter-spacing:-0.735px;white-space:nowrap;padding-top:1px">ASFR</span>
<span class="t" style="left:763px;top:207px;width:86px;overflow:hidden;height:23px;font-size:15px;line-height:23px;font-weight:normal;letter-spacing:0.809px;white-space:nowrap;padding-top:1px">15-19</span>
<span class="t" style="right:632.13px;top:207px;height:23px;font-size:15px;line-height:23px;font-weight:normal;letter-spacing:0.87px;white-space:nowrap;padding-top:1px">54755</span>
<span class="t" style="right:487.13px;top:207px;height:23px;font-size:15px;line-height:23px;font-weight:normal;letter-spacing:0.87px;white-space:nowrap;padding-top:1px">5381</span>
<span class="t" style="right:368.22px;top:207px;height:23px;font-size:15px;line-height:23px;font-weight:normal;letter-spacing:0.778px;white-space:nowrap;padding-top:1px">0.098</span>
<span class="t" style="left:763px;top:231px;width:86px;overflow:hidden;height:23px;font-size:15px;line-height:23px;font-weight:normal;letter-spacing:0.809px;white-space:nowrap;padding-top:1px">20-24</span>
<span class="t" style="right:632.13px;top:231px;height:23px;font-size:15px;line-height:23px;font-weight:normal;letter-spacing:0.87px;white-space:nowrap;padding-top:1px">54802</span>
<span class="t" style="right:487.13px;top:231px;height:23px;font-size:15px;line-height:23px;font-weight:normal;letter-spacing:0.87px;white-space:nowrap;padding-top:1px">33032</span>
<span class="t" style="right:368.22px;top:231px;height:23px;font-size:15px;line-height:23px;font-weight:normal;letter-spacing:0.778px;white-space:nowrap;padding-top:1px">0.603</span>
<span class="t" style="left:763px;top:255px;width:86px;overflow:hidden;height:23px;font-size:15px;line-height:23px;font-weight:normal;letter-spacing:0.809px;white-space:nowrap;padding-top:1px">25-29</span>
<span class="t" style="right:632.13px;top:255px;height:23px;font-size:15px;line-height:23px;font-weight:normal;letter-spacing:0.87px;white-space:nowrap;padding-top:1px">49884</span>
<span class="t" style="right:487.13px;top:255px;height:23px;font-size:15px;line-height:23px;font-weight:normal;letter-spacing:0.87px;white-space:nowrap;padding-top:1px">70079</span>
<span class="t" style="right:368.22px;top:255px;height:23px;font-size:15px;line-height:23px;font-weight:normal;letter-spacing:0.778px;white-space:nowrap;padding-top:1px">1.405</span>
<span class="t" style="left:763px;top:279px;width:86px;overflow:hidden;height:23px;font-size:15px;line-height:23px;font-weight:normal;letter-spacing:0.809px;white-space:nowrap;padding-top:1px">30-34</span>
<span class="t" style="right:632.13px;top:279px;height:23px;font-size:15px;line-height:23px;font-weight:normal;letter-spacing:0.87px;white-space:nowrap;padding-top:1px">40006</span>
<span class="t" style="right:487.13px;top:279px;height:23px;font-size:15px;line-height:23px;font-weight:normal;letter-spacing:0.87px;white-space:nowrap;padding-top:1px">95634</span>
<span class="t" style="right:368.22px;top:279px;height:23px;font-size:15px;line-height:23px;font-weight:normal;letter-spacing:0.778px;white-space:nowrap;padding-top:1px">2.390</span>
<span class="t" style="left:763px;top:303px;width:86px;overflow:hidden;height:23px;font-size:15px;line-height:23px;font-weight:normal;letter-spacing:0.809px;white-space:nowrap;padding-top:1px">35-39</span>
<span class="t" style="right:632.13px;top:303px;height:23px;font-size:15px;line-height:23px;font-weight:normal;letter-spacing:0.87px;white-space:nowrap;padding-top:1px">33355</span>
<span class="t" style="right:487.13px;top:303px;height:23px;font-size:15px;line-height:23px;font-weight:normal;letter-spacing:0.87px;white-space:nowrap;padding-top:1px">107480</span>
<span class="t" style="right:368.22px;top:303px;height:23px;font-size:15px;line-height:23px;font-weight:normal;letter-spacing:0.778px;white-space:nowrap;padding-top:1px">3.222</span>
<span class="t" style="left:763px;top:327px;width:86px;overflow:hidden;height:23px;font-size:15px;line-height:23px;font-weight:normal;letter-spacing:0.809px;white-space:nowrap;padding-top:1px">40-44</span>
<span class="t" style="right:632.13px;top:327px;height:23px;font-size:15px;line-height:23px;font-weight:normal;letter-spacing:0.87px;white-space:nowrap;padding-top:1px">27063</span>
<span class="t" style="right:487.13px;top:327px;height:23px;font-size:15px;line-height:23px;font-weight:normal;letter-spacing:0.87px;white-space:nowrap;padding-top:1px">104902</span>
<span class="t" style="right:368.22px;top:327px;height:23px;font-size:15px;line-height:23px;font-weight:normal;letter-spacing:0.778px;white-space:nowrap;padding-top:1px">3.876</span>
<span class="t" style="left:763px;top:351px;width:86px;overflow:hidden;height:23px;font-size:15px;line-height:23px;font-weight:normal;letter-spacing:0.809px;white-space:nowrap;padding-top:1px">45-49</span>
<span class="t" style="right:632.13px;top:351px;height:23px;font-size:15px;line-height:23px;font-weight:normal;letter-spacing:0.87px;white-space:nowrap;padding-top:1px">22073</span>
<span class="t" style="right:487.13px;top:351px;height:23px;font-size:15px;line-height:23px;font-weight:normal;letter-spacing:0.87px;white-space:nowrap;padding-top:1px">94441</span>
<span class="t" style="right:368.22px;top:351px;height:23px;font-size:15px;line-height:23px;font-weight:normal;letter-spacing:0.778px;white-space:nowrap;padding-top:1px">4.279</span>
<span class="t" style="left:363px;top:423px;width:188px;overflow:hidden;height:23px;font-size:15px;line-height:23px;font-weight:bold;letter-spacing:0.137px;white-space:nowrap;padding-top:1px">Sum of CHBORN</span>
<span class="t" style="left:556px;top:423px;width:113px;overflow:hidden;height:23px;font-size:15px;line-height:23px;font-weight:bold;letter-spacing:0.155px;white-space:nowrap;padding-top:1px">Column Labels</span>
<span class="t" style="left:363px;top:447px;width:188px;overflow:hidden;height:23px;font-size:15px;line-height:23px;font-weight:bold;letter-spacing:0.158px;white-space:nowrap;padding-top:1px">Row Labels</span>
<span class="t" style="right:931.13px;top:447px;height:23px;font-size:15px;line-height:23px;font-weight:bold;letter-spacing:0.87px;white-space:nowrap;padding-top:1px">1</span>
<span class="t" style="right:842.13px;top:447px;height:23px;font-size:15px;line-height:23px;font-weight:bold;letter-spacing:0.87px;white-space:nowrap;padding-top:1px">2</span>
<span class="t" style="left:763px;top:447px;height:23px;font-size:15px;line-height:23px;font-weight:bold;letter-spacing:0.553px;white-space:nowrap;padding-top:1px">Grand Total</span>
<span class="t" style="left:363px;top:471px;width:188px;overflow:hidden;height:23px;font-size:15px;line-height:23px;font-weight:normal;letter-spacing:0.87px;white-space:nowrap;padding-top:1px">0</span>
<span class="t" style="right:931.13px;top:471px;height:23px;font-size:15px;line-height:23px;font-weight:normal;letter-spacing:0.87px;white-space:nowrap;padding-top:1px">0</span>
<span class="t" style="right:842.13px;top:471px;height:23px;font-size:15px;line-height:23px;font-weight:normal;letter-spacing:0.87px;white-space:nowrap;padding-top:1px">0</span>
<span class="t" style="right:751.13px;top:471px;height:23px;font-size:15px;line-height:23px;font-weight:normal;letter-spacing:0.87px;white-space:nowrap;padding-top:1px">0</span>
<span class="t" style="left:363px;top:495px;width:188px;overflow:hidden;height:23px;font-size:15px;line-height:23px;font-weight:normal;letter-spacing:0.87px;white-space:nowrap;padding-top:1px">1</span>
<span class="t" style="right:931.13px;top:495px;height:23px;font-size:15px;line-height:23px;font-weight:normal;letter-spacing:0.87px;white-space:nowrap;padding-top:1px">0</span>
<span class="t" style="right:842.13px;top:495px;height:23px;font-size:15px;line-height:23px;font-weight:normal;letter-spacing:0.87px;white-space:nowrap;padding-top:1px">0</span>
<span class="t" style="right:751.13px;top:495px;height:23px;font-size:15px;line-height:23px;font-weight:normal;letter-spacing:0.87px;white-space:nowrap;padding-top:1px">0</span>
<span class="t" style="left:363px;top:519px;width:188px;overflow:hidden;height:23px;font-size:15px;line-height:23px;font-weight:normal;letter-spacing:0.87px;white-space:nowrap;padding-top:1px">2</span>
<span class="t" style="right:931.13px;top:519px;height:23px;font-size:15px;line-height:23px;font-weight:normal;letter-spacing:0.87px;white-space:nowrap;padding-top:1px">0</span>
<span class="t" style="right:842.13px;top:519px;height:23px;font-size:15px;line-height:23px;font-weight:normal;letter-spacing:0.87px;white-space:nowrap;padding-top:1px">0</span>
<span class="t" style="right:751.13px;top:519px;height:23px;font-size:15px;line-height:23px;font-weight:normal;letter-spacing:0.87px;white-space:nowrap;padding-top:1px">0</span>
<span class="t" style="left:363px;top:543px;width:188px;overflow:hidden;height:23px;font-size:15px;line-height:23px;font-weight:normal;letter-spacing:0.87px;white-space:nowrap;padding-top:1px">3</span>
<span class="t" style="right:931.13px;top:543px;height:23px;font-size:15px;line-height:23px;font-weight:normal;letter-spacing:0.87px;white-space:nowrap;padding-top:1px">0</span>
<span class="t" style="right:842.13px;top:543px;height:23px;font-size:15px;line-height:23px;font-weight:normal;letter-spacing:0.87px;white-space:nowrap;padding-top:1px">0</span>
<span class="t" style="right:751.13px;top:543px;height:23px;font-size:15px;line-height:23px;font-weight:normal;letter-spacing:0.87px;white-space:nowrap;padding-top:1px">0</span>
<span class="t" style="left:363px;top:567px;width:188px;overflow:hidden;height:23px;font-size:15px;line-height:23px;font-weight:normal;letter-spacing:0.87px;white-space:nowrap;padding-top:1px">4</span>
<span class="t" style="right:931.13px;top:567px;height:23px;font-size:15px;line-height:23px;font-weight:normal;letter-spacing:0.87px;white-space:nowrap;padding-top:1px">0</span>
<span class="t" style="right:842.13px;top:567px;height:23px;font-size:15px;line-height:23px;font-weight:normal;letter-spacing:0.87px;white-space:nowrap;padding-top:1px">0</span>
<span class="t" style="right:751.13px;top:567px;height:23px;font-size:15px;line-height:23px;font-weight:normal;letter-spacing:0.87px;white-space:nowrap;padding-top:1px">0</span>
<span class="t" style="left:363px;top:591px;width:188px;overflow:hidden;height:23px;font-size:15px;line-height:23px;font-weight:normal;letter-spacing:0.87px;white-space:nowrap;padding-top:1px">5</span>
<span class="t" style="right:931.13px;top:591px;height:23px;font-size:15px;line-height:23px;font-weight:normal;letter-spacing:0.87px;white-space:nowrap;padding-top:1px">0</span>
<span class="t" style="right:842.13px;top:591px;height:23px;font-size:15px;line-height:23px;font-weight:normal;letter-spacing:0.87px;white-space:nowrap;padding-top:1px">0</span>
<span class="t" style="right:751.13px;top:591px;height:23px;font-size:15px;line-height:23px;font-weight:normal;letter-spacing:0.87px;white-space:nowrap;padding-top:1px">0</span>
<span class="t" style="left:363px;top:615px;width:188px;overflow:hidden;height:23px;font-size:15px;line-height:23px;font-weight:normal;letter-spacing:0.87px;white-space:nowrap;padding-top:1px">6</span>
<span class="t" style="right:931.13px;top:615px;height:23px;font-size:15px;line-height:23px;font-weight:normal;letter-spacing:0.87px;white-space:nowrap;padding-top:1px">0</span>
<span class="t" style="right:842.13px;top:615px;height:23px;font-size:15px;line-height:23px;font-weight:normal;letter-spacing:0.87px;white-space:nowrap;padding-top:1px">0</span>
<span class="t" style="right:751.13px;top:615px;height:23px;font-size:15px;line-height:23px;font-weight:normal;letter-spacing:0.87px;white-space:nowrap;padding-top:1px">0</span>
<span class="t" style="left:363px;top:639px;width:188px;overflow:hidden;height:23px;font-size:15px;line-height:23px;font-weight:normal;letter-spacing:0.87px;white-space:nowrap;padding-top:1px">7</span>
<span class="t" style="right:931.13px;top:639px;height:23px;font-size:15px;line-height:23px;font-weight:normal;letter-spacing:0.87px;white-space:nowrap;padding-top:1px">0</span>
<span class="t" style="right:842.13px;top:639px;height:23px;font-size:15px;line-height:23px;font-weight:normal;letter-spacing:0.87px;white-space:nowrap;padding-top:1px">0</span>
<span class="t" style="right:751.13px;top:639px;height:23px;font-size:15px;line-height:23px;font-weight:normal;letter-spacing:0.87px;white-space:nowrap;padding-top:1px">0</span>
<span class="t" style="left:363px;top:663px;width:188px;overflow:hidden;height:23px;font-size:15px;line-height:23px;font-weight:normal;letter-spacing:0.87px;white-space:nowrap;padding-top:1px">8</span>
<span class="t" style="right:931.13px;top:663px;height:23px;font-size:15px;line-height:23px;font-weight:normal;letter-spacing:0.87px;white-space:nowrap;padding-top:1px">0</span>
<span class="t" style="right:842.13px;top:663px;height:23px;font-size:15px;line-height:23px;font-weight:normal;letter-spacing:0.87px;white-space:nowrap;padding-top:1px">0</span>
<span class="t" style="right:751.13px;top:663px;height:23px;font-size:15px;line-height:23px;font-weight:normal;letter-spacing:0.87px;white-space:nowrap;padding-top:1px">0</span>
<span class="t" style="left:363px;top:687px;width:188px;overflow:hidden;height:23px;font-size:15px;line-height:23px;font-weight:normal;letter-spacing:0.87px;white-space:nowrap;padding-top:1px">9</span>
<span class="t" style="right:931.13px;top:687px;height:23px;font-size:15px;line-height:23px;font-weight:normal;letter-spacing:0.87px;white-space:nowrap;padding-top:1px">0</span>
<span class="t" style="right:842.13px;top:687px;height:23px;font-size:15px;line-height:23px;font-weight:normal;letter-spacing:0.87px;white-space:nowrap;padding-top:1px">0</span>
<span class="t" style="right:751.13px;top:687px;height:23px;font-size:15px;line-height:23px;font-weight:normal;letter-spacing:0.87px;white-space:nowrap;padding-top:1px">0</span>
<span class="t" style="left:363px;top:711px;width:188px;overflow:hidden;height:23px;font-size:15px;line-height:23px;font-weight:normal;letter-spacing:0.87px;white-space:nowrap;padding-top:1px">10</span>
<span class="t" style="right:931.13px;top:711px;height:23px;font-size:15px;line-height:23px;font-weight:normal;letter-spacing:0.87px;white-space:nowrap;padding-top:1px">0</span>
<span class="t" style="right:842.13px;top:711px;height:23px;font-size:15px;line-height:23px;font-weight:normal;letter-spacing:0.87px;white-space:nowrap;padding-top:1px">0</span>
<span class="t" style="right:751.13px;top:711px;height:23px;font-size:15px;line-height:23px;font-weight:normal;letter-spacing:0.87px;white-space:nowrap;padding-top:1px">0</span>
<span class="t" style="left:363px;top:735px;width:188px;overflow:hidden;height:23px;font-size:15px;line-height:23px;font-weight:normal;letter-spacing:1.426px;white-space:nowrap;padding-top:1px">11</span>
<span class="t" style="right:931.13px;top:735px;height:23px;font-size:15px;line-height:23px;font-weight:normal;letter-spacing:0.87px;white-space:nowrap;padding-top:1px">0</span>
<span class="t" style="right:842.13px;top:735px;height:23px;font-size:15px;line-height:23px;font-weight:normal;letter-spacing:0.87px;white-space:nowrap;padding-top:1px">0</span>
<span class="t" style="right:751.13px;top:735px;height:23px;font-size:15px;line-height:23px;font-weight:normal;letter-spacing:0.87px;white-space:nowrap;padding-top:1px">0</span>
<span class="t" style="left:363px;top:759px;width:188px;overflow:hidden;height:23px;font-size:15px;line-height:23px;font-weight:normal;letter-spacing:0.87px;white-space:nowrap;padding-top:1px">12</span>
<span class="t" style="right:931.13px;top:759px;height:23px;font-size:15px;line-height:23px;font-weight:normal;letter-spacing:0.87px;white-space:nowrap;padding-top:1px">0</span>
<span class="t" style="right:842.13px;top:759px;height:23px;font-size:15px;line-height:23px;font-weight:normal;letter-spacing:0.87px;white-space:nowrap;padding-top:1px">40</span>
<span class="t" style="right:751.13px;top:759px;height:23px;font-size:15px;line-height:23px;font-weight:normal;letter-spacing:0.87px;white-space:nowrap;padding-top:1px">40</span>
<span class="t" style="left:363px;top:783px;width:188px;overflow:hidden;height:23px;font-size:15px;line-height:23px;font-weight:normal;letter-spacing:0.87px;white-space:nowrap;padding-top:1px">13</span>
<span class="t" style="right:931.13px;top:783px;height:23px;font-size:15px;line-height:23px;font-weight:normal;letter-spacing:0.87px;white-space:nowrap;padding-top:1px">0</span>
<span class="t" style="right:842.13px;top:783px;height:23px;font-size:15px;line-height:23px;font-weight:normal;letter-spacing:0.87px;white-space:nowrap;padding-top:1px">29</span>
<span class="t" style="right:751.13px;top:783px;height:23px;font-size:15px;line-height:23px;font-weight:normal;letter-spacing:0.87px;white-space:nowrap;padding-top:1px">29</span>
<span class="t" style="left:973px;top:447px;width:140px;overflow:hidden;height:23px;font-size:15px;line-height:23px;font-weight:bold;letter-spacing:0.204px;white-space:nowrap;padding-top:1px">Count of CHBORN</span>
<span class="t" style="left:1118px;top:447px;width:114px;overflow:hidden;height:23px;font-size:15px;line-height:23px;font-weight:bold;letter-spacing:0.155px;white-space:nowrap;padding-top:1px">Column Labels</span>
<span class="t" style="left:973px;top:471px;width:140px;overflow:hidden;height:23px;font-size:15px;line-height:23px;font-weight:bold;letter-spacing:0.158px;white-space:nowrap;padding-top:1px">Row Labels</span>
<span class="t" style="right:368.13px;top:471px;height:23px;font-size:15px;line-height:23px;font-weight:bold;letter-spacing:0.87px;white-space:nowrap;padding-top:1px">1</span>
<span class="t" style="right:305.13px;top:471px;height:23px;font-size:15px;line-height:23px;font-weight:bold;letter-spacing:0.87px;white-space:nowrap;padding-top:1px">2</span>
<span class="t" style="left:1300px;top:471px;height:23px;font-size:15px;line-height:23px;font-weight:bold;letter-spacing:0.553px;white-space:nowrap;padding-top:1px">Grand Total</span>
<span class="t" style="left:973px;top:495px;width:140px;overflow:hidden;height:23px;font-size:15px;line-height:23px;font-weight:normal;letter-spacing:0.87px;white-space:nowrap;padding-top:1px">0</span>
<span class="t" style="right:368.13px;top:495px;height:23px;font-size:15px;line-height:23px;font-weight:normal;letter-spacing:0.87px;white-space:nowrap;padding-top:1px">15631</span>
<span class="t" style="right:305.13px;top:495px;height:23px;font-size:15px;line-height:23px;font-weight:normal;letter-spacing:0.87px;white-space:nowrap;padding-top:1px">15550</span>
<span class="t" style="right:202.91px;top:495px;height:23px;font-size:15px;line-height:23px;font-weight:normal;letter-spacing:1.093px;white-space:nowrap;padding-top:1px">31181</span>
<span class="t" style="left:973px;top:519px;width:140px;overflow:hidden;height:23px;font-size:15px;line-height:23px;font-weight:normal;letter-spacing:0.87px;white-space:nowrap;padding-top:1px">1</span>
<span class="t" style="right:368.13px;top:519px;height:23px;font-size:15px;line-height:23px;font-weight:normal;letter-spacing:0.87px;white-space:nowrap;padding-top:1px">12932</span>
<span class="t" style="right:305.13px;top:519px;height:23px;font-size:15px;line-height:23px;font-weight:normal;letter-spacing:0.87px;white-space:nowrap;padding-top:1px">12414</span>
<span class="t" style="right:203.13px;top:519px;height:23px;font-size:15px;line-height:23px;font-weight:normal;letter-spacing:0.87px;white-space:nowrap;padding-top:1px">25346</span>
<span class="t" style="left:973px;top:543px;width:140px;overflow:hidden;height:23px;font-size:15px;line-height:23px;font-weight:normal;letter-spacing:0.87px;white-space:nowrap;padding-top:1px">2</span>
<span class="t" style="right:368.13px;top:543px;height:23px;font-size:15px;line-height:23px;font-weight:normal;letter-spacing:0.87px;white-space:nowrap;padding-top:1px">13719</span>
<span class="t" style="right:305.13px;top:543px;height:23px;font-size:15px;line-height:23px;font-weight:normal;letter-spacing:0.87px;white-space:nowrap;padding-top:1px">13477</span>
<span class="t" style="right:203.13px;top:543px;height:23px;font-size:15px;line-height:23px;font-weight:normal;letter-spacing:0.87px;white-space:nowrap;padding-top:1px">27196</span>
<span class="t" style="left:973px;top:567px;width:140px;overflow:hidden;height:23px;font-size:15px;line-height:23px;font-weight:normal;letter-spacing:0.87px;white-space:nowrap;padding-top:1px">3</span>
<span class="t" style="right:368.13px;top:567px;height:23px;font-size:15px;line-height:23px;font-weight:normal;letter-spacing:0.87px;white-space:nowrap;padding-top:1px">13808</span>
<span class="t" style="right:305.13px;top:567px;height:23px;font-size:15px;line-height:23px;font-weight:normal;letter-spacing:0.87px;white-space:nowrap;padding-top:1px">13243</span>
<span class="t" style="right:203.13px;top:567px;height:23px;font-size:15px;line-height:23px;font-weight:normal;letter-spacing:0.87px;white-space:nowrap;padding-top:1px">27051</span>
<span class="t" style="left:973px;top:591px;width:140px;overflow:hidden;height:23px;font-size:15px;line-height:23px;font-weight:normal;letter-spacing:0.87px;white-space:nowrap;padding-top:1px">4</span>
<span class="t" style="right:368.13px;top:591px;height:23px;font-size:15px;line-height:23px;font-weight:normal;letter-spacing:0.87px;white-space:nowrap;padding-top:1px">13666</span>
<span class="t" style="right:305.13px;top:591px;height:23px;font-size:15px;line-height:23px;font-weight:normal;letter-spacing:0.87px;white-space:nowrap;padding-top:1px">13095</span>
<span class="t" style="right:203.13px;top:591px;height:23px;font-size:15px;line-height:23px;font-weight:normal;letter-spacing:0.87px;white-space:nowrap;padding-top:1px">26761</span>
<span class="t" style="left:973px;top:615px;width:140px;overflow:hidden;height:23px;font-size:15px;line-height:23px;font-weight:normal;letter-spacing:0.87px;white-space:nowrap;padding-top:1px">5</span>
<span class="t" style="right:368.13px;top:615px;height:23px;font-size:15px;line-height:23px;font-weight:normal;letter-spacing:0.87px;white-space:nowrap;padding-top:1px">13009</span>
<span class="t" style="right:305.13px;top:615px;height:23px;font-size:15px;line-height:23px;font-weight:normal;letter-spacing:0.87px;white-space:nowrap;padding-top:1px">12393</span>
<span class="t" style="right:203.13px;top:615px;height:23px;font-size:15px;line-height:23px;font-weight:normal;letter-spacing:0.87px;white-space:nowrap;padding-top:1px">25402</span>
<span class="t" style="left:973px;top:639px;width:140px;overflow:hidden;height:23px;font-size:15px;line-height:23px;font-weight:normal;letter-spacing:0.87px;white-space:nowrap;padding-top:1px">6</span>
<span class="t" style="right:368.13px;top:639px;height:23px;font-size:15px;line-height:23px;font-weight:normal;letter-spacing:0.87px;white-space:nowrap;padding-top:1px">12673</span>
<span class="t" style="right:305.13px;top:639px;height:23px;font-size:15px;line-height:23px;font-weight:normal;letter-spacing:0.87px;white-space:nowrap;padding-top:1px">12293</span>
<span class="t" style="right:203.13px;top:639px;height:23px;font-size:15px;line-height:23px;font-weight:normal;letter-spacing:0.87px;white-space:nowrap;padding-top:1px">24966</span>
<span class="t" style="left:973px;top:663px;width:140px;overflow:hidden;height:23px;font-size:15px;line-height:23px;font-weight:normal;letter-spacing:0.87px;white-space:nowrap;padding-top:1px">7</span>
<span class="t" style="right:368.13px;top:663px;height:23px;font-size:15px;line-height:23px;font-weight:normal;letter-spacing:0.87px;white-space:nowrap;padding-top:1px">12416</span>
<span class="t" style="right:304.91px;top:663px;height:23px;font-size:15px;line-height:23px;font-weight:normal;letter-spacing:1.093px;white-space:nowrap;padding-top:1px">12011</span>
<span class="t" style="right:203.13px;top:663px;height:23px;font-size:15px;line-height:23px;font-weight:normal;letter-spacing:0.87px;white-space:nowrap;padding-top:1px">24427</span>
<span class="t" style="left:973px;top:687px;width:140px;overflow:hidden;height:23px;font-size:15px;line-height:23px;font-weight:normal;letter-spacing:0.87px;white-space:nowrap;padding-top:1px">8</span>
<span class="t" style="right:368.13px;top:687px;height:23px;font-size:15px;line-height:23px;font-weight:normal;letter-spacing:0.87px;white-space:nowrap;padding-top:1px">12136</span>
<span class="t" style="right:305.13px;top:687px;height:23px;font-size:15px;line-height:23px;font-weight:normal;letter-spacing:0.87px;white-space:nowrap;padding-top:1px">12193</span>
<span class="t" style="right:203.13px;top:687px;height:23px;font-size:15px;line-height:23px;font-weight:normal;letter-spacing:0.87px;white-space:nowrap;padding-top:1px">24329</span>
<span class="t" style="left:973px;top:711px;width:140px;overflow:hidden;height:23px;font-size:15px;line-height:23px;font-weight:normal;letter-spacing:0.87px;white-space:nowrap;padding-top:1px">9</span>
<span class="t" style="right:367.69px;top:711px;height:23px;font-size:15px;line-height:23px;font-weight:normal;letter-spacing:1.315px;white-space:nowrap;padding-top:1px">11102</span>
<span class="t" style="right:304.91px;top:711px;height:23px;font-size:15px;line-height:23px;font-weight:normal;letter-spacing:1.093px;white-space:nowrap;padding-top:1px">11061</span>
<span class="t" style="right:203.13px;top:711px;height:23px;font-size:15px;line-height:23px;font-weight:normal;letter-spacing:0.87px;white-space:nowrap;padding-top:1px">22163</span>
<span class="t" style="left:973px;top:735px;width:140px;overflow:hidden;height:23px;font-size:15px;line-height:23px;font-weight:normal;letter-spacing:0.87px;white-space:nowrap;padding-top:1px">10</span>
<span class="t" style="right:368.13px;top:735px;height:23px;font-size:15px;line-height:23px;font-weight:normal;letter-spacing:0.87px;white-space:nowrap;padding-top:1px">14332</span>
<span class="t" style="right:305.13px;top:735px;height:23px;font-size:15px;line-height:23px;font-weight:normal;letter-spacing:0.87px;white-space:nowrap;padding-top:1px">14174</span>
<span class="t" style="right:203.13px;top:735px;height:23px;font-size:15px;line-height:23px;font-weight:normal;letter-spacing:0.87px;white-space:nowrap;padding-top:1px">28506</span>
<span class="t" style="left:973px;top:759px;width:140px;overflow:hidden;height:23px;font-size:15px;line-height:23px;font-weight:normal;letter-spacing:1.426px;white-space:nowrap;padding-top:1px">11</span>
<span class="t" style="right:368.13px;top:759px;height:23px;font-size:15px;line-height:23px;font-weight:normal;letter-spacing:0.87px;white-space:nowrap;padding-top:1px">10329</span>
<span class="t" style="right:305.13px;top:759px;height:23px;font-size:15px;line-height:23px;font-weight:normal;letter-spacing:0.87px;white-space:nowrap;padding-top:1px">10345</span>
<span class="t" style="right:203.13px;top:759px;height:23px;font-size:15px;line-height:23px;font-weight:normal;letter-spacing:0.87px;white-space:nowrap;padding-top:1px">20674</span>
<span class="t" style="left:973px;top:783px;width:140px;overflow:hidden;height:23px;font-size:15px;line-height:23px;font-weight:normal;letter-spacing:0.87px;white-space:nowrap;padding-top:1px">12</span>
<span class="t" style="right:368.13px;top:783px;height:23px;font-size:15px;line-height:23px;font-weight:normal;letter-spacing:0.87px;white-space:nowrap;padding-top:1px">12155</span>
<span class="t" style="right:304.91px;top:783px;height:23px;font-size:15px;line-height:23px;font-weight:normal;letter-spacing:1.093px;white-space:nowrap;padding-top:1px">11921</span>
<span class="t" style="right:203.13px;top:783px;height:23px;font-size:15px;line-height:23px;font-weight:normal;letter-spacing:0.87px;white-space:nowrap;padding-top:1px">24076</span>
<div style="left:650px;top:424.5px;width:20px;height:20px;box-sizing:border-box;border:1px solid #b9b9b9;background:linear-gradient(#fff,#f2f2f2)"></div>
<svg style="position:absolute;left:650px;top:424.5px" width="20" height="20"><path d="M6 8.5 H14 L10 12.5 Z" fill="#555"/></svg>
<div style="left:532px;top:448.5px;width:20px;height:20px;box-sizing:border-box;border:1px solid #b9b9b9;background:linear-gradient(#fff,#f2f2f2)"></div>
<svg style="position:absolute;left:532px;top:448.5px" width="20" height="20"><path d="M6 8.5 H14 L10 12.5 Z" fill="#555"/></svg>
<div style="left:1213px;top:448.5px;width:20px;height:20px;box-sizing:border-box;border:1px solid #b9b9b9;background:linear-gradient(#fff,#f2f2f2)"></div>
<svg style="position:absolute;left:1213px;top:448.5px" width="20" height="20"><path d="M6 8.5 H14 L10 12.5 Z" fill="#555"/></svg>
<div style="left:1094px;top:472.5px;width:20px;height:20px;box-sizing:border-box;border:1px solid #b9b9b9;background:linear-gradient(#fff,#f2f2f2)"></div>
<svg style="position:absolute;left:1094px;top:472.5px" width="20" height="20"><path d="M6 8.5 H14 L10 12.5 Z" fill="#555"/></svg>
<div style="left:1477px;top:457px;width:2px;height:14px;background:#217346;"></div>
<div style="left:1477px;top:469px;width:81px;height:2px;background:#217346;"></div>
<div style="left:1557px;top:457px;width:2px;height:10px;background:#217346;"></div>
<div style="left:1556px;top:468px;width:6px;height:6px;background:#217346;box-shadow:0 0 0 1px #fff"></div>
<svg style="position:absolute;left:1240px;top:171px" width="335" height="288">
<rect x="0.5" y="0.5" width="334" height="287" fill="#fff" stroke="#868686"/>
<g stroke="#868686" stroke-width="1" fill="none">
<line x1="65.5" y1="18" x2="65.5" y2="246"/>
<line x1="60.5" y1="18.5" x2="65.5" y2="18.5"/>
<line x1="60.5" y1="50.5" x2="65.5" y2="50.5"/>
<line x1="60.5" y1="82.5" x2="65.5" y2="82.5"/>
<line x1="60.5" y1="115.5" x2="65.5" y2="115.5"/>
<line x1="60.5" y1="147.5" x2="65.5" y2="147.5"/>
<line x1="60.5" y1="180.5" x2="65.5" y2="180.5"/>
<line x1="60.5" y1="212.5" x2="65.5" y2="212.5"/>
<line x1="60.5" y1="245.5" x2="65.5" y2="245.5"/>
<line x1="65.5" y1="245.5" x2="301" y2="245.5"/>
<line x1="65.5" y1="245.5" x2="65.5" y2="250.5"/>
<line x1="144.5" y1="245.5" x2="144.5" y2="250.5"/>
<line x1="222.5" y1="245.5" x2="222.5" y2="250.5"/>
<line x1="300.5" y1="245.5" x2="300.5" y2="250.5"/>
</g>
<rect x="66" y="26.0" width="168.0" height="9" fill="#c0504d"/>
<rect x="66" y="58.4" width="152.1" height="9" fill="#c0504d"/>
<rect x="66" y="90.9" width="126.5" height="9" fill="#c0504d"/>
<rect x="66" y="123.3" width="93.8" height="9" fill="#c0504d"/>
<rect x="66" y="155.7" width="55.1" height="9" fill="#c0504d"/>
<rect x="66" y="188.1" width="23.7" height="9" fill="#c0504d"/>
<rect x="66" y="220.6" width="3.8" height="9" fill="#c0504d"/>
</svg>
<span class="t" style="left:1251px;top:196.30px;font-size:15px;line-height:19px;color:#262626;font-weight:normal;letter-spacing:0.029px;">45-49</span>
<span class="t" style="left:1483.95075px;top:191.13px;font-size:15.5px;line-height:19px;color:#000;font-weight:normal;letter-spacing:-0.234px;">4.279</span>
<span class="t" style="left:1251px;top:228.73px;font-size:15px;line-height:19px;color:#262626;font-weight:normal;letter-spacing:0.029px;">40-44</span>
<span class="t" style="left:1468.133px;top:223.56px;font-size:15.5px;line-height:19px;color:#000;font-weight:normal;letter-spacing:-0.234px;">3.876</span>
<span class="t" style="left:1251px;top:261.16px;font-size:15px;line-height:19px;color:#262626;font-weight:normal;letter-spacing:0.029px;">35-39</span>
<span class="t" style="left:1442.4635px;top:255.99px;font-size:15.5px;line-height:19px;color:#000;font-weight:normal;letter-spacing:-0.234px;">3.222</span>
<span class="t" style="left:1251px;top:293.59px;font-size:15px;line-height:19px;color:#262626;font-weight:normal;letter-spacing:0.029px;">30-34</span>
<span class="t" style="left:1409.8075px;top:288.42px;font-size:15.5px;line-height:19px;color:#000;font-weight:normal;letter-spacing:-0.234px;">2.390</span>
<span class="t" style="left:1251px;top:326.02px;font-size:15px;line-height:19px;color:#262626;font-weight:normal;letter-spacing:0.029px;">25-29</span>
<span class="t" style="left:1371.14625px;top:320.85px;font-size:15.5px;line-height:19px;color:#000;font-weight:normal;letter-spacing:-0.234px;">1.405</span>
<span class="t" style="left:1251px;top:358.45px;font-size:15px;line-height:19px;color:#262626;font-weight:normal;letter-spacing:0.029px;">20-24</span>
<span class="t" style="left:1339.66775px;top:353.28px;font-size:15.5px;line-height:19px;color:#000;font-weight:normal;letter-spacing:-0.234px;">0.603</span>
<span class="t" style="left:1251px;top:390.88px;font-size:15px;line-height:19px;color:#262626;font-weight:normal;letter-spacing:0.029px;">15-19</span>
<span class="t" style="left:1319.8465px;top:385.71px;font-size:15.5px;line-height:19px;color:#000;font-weight:normal;letter-spacing:-0.234px;">0.098</span>
<span class="t" style="left:1005.0px;width:600px;text-align:center;top:428.30px;font-size:15px;line-height:19px;color:#262626;font-weight:normal;letter-spacing:0px;">0</span>
<span class="t" style="left:1083.5px;width:600px;text-align:center;top:428.30px;font-size:15px;line-height:19px;color:#262626;font-weight:normal;letter-spacing:0px;">2</span>
<span class="t" style="left:1162.0px;width:600px;text-align:center;top:428.30px;font-size:15px;line-height:19px;color:#262626;font-weight:normal;letter-spacing:0px;">4</span>
<span class="t" style="left:1240.5px;width:600px;text-align:center;top:428.30px;font-size:15px;line-height:19px;color:#262626;font-weight:normal;letter-spacing:0px;">6</span>
<div style="left:1515px;top:340px;width:9px;height:9px;background:#c0504d;"></div>
<span class="t" style="left:1528px;top:334.98px;font-size:14.5px;line-height:18px;color:#262626;font-weight:normal;letter-spacing:-1.253px;">ASFR</span>
<div style="left:1574px;top:158px;width:1px;height:648px;background:#9a9a9a;"></div>
<div style="left:1559px;top:135px;width:15px;height:23px;background:#e6e6e6;"></div>
<div style="left:1575px;top:135px;width:24px;height:671px;background:#e6e6e6;"></div>
<div style="left:1578px;top:177px;width:19px;height:611px;background:#f0f0f0;box-sizing:border-box;border-left:1px solid #e9e9e9;border-right:1px solid #e9e9e9"></div>
<div style="left:1578px;top:137px;width:19px;height:20px;background:#fff;box-sizing:border-box;border:1px solid #ababab;border-bottom:2px solid #ababab"></div>
<svg style="position:absolute;left:1578px;top:137px" width="19" height="19"><path d="M4.5 11.5 H14.5 L9.5 6.5 Z" fill="#222"/></svg>
<div style="left:1578px;top:157px;width:19px;height:20px;background:#fff;box-sizing:border-box;border:1px solid #ababab"></div>
<div style="left:1578px;top:788px;width:19px;height:19px;background:#fff;box-sizing:border-box;border:1px solid #ababab"></div>
<svg style="position:absolute;left:1578px;top:788px" width="19" height="19"><path d="M4.5 8 H14.5 L9.5 13 Z" fill="#222"/></svg>
<div style="left:0px;top:806px;width:1574px;height:1px;background:#9a9a9a;"></div>
<div style="left:0px;top:807px;width:1599px;height:28px;background:#e6e6e6;"></div>
<svg style="position:absolute;left:0;top:806px" width="80" height="28"><path d="M33 11 L28 15 L33 19 Z M57 11 L62 15 L57 19 Z" fill="#b8b8b8"/></svg>
<div style="left:103px;top:806px;width:135px;height:26px;background:#fff;box-sizing:border-box;border-left:1px solid #c6c6c6;border-right:1px solid #c6c6c6;border-bottom:2px solid #217346"></div>
<span class="t" style="left:115px;top:806.78px;font-size:16.5px;line-height:21px;color:#217346;font-weight:bold;letter-spacing:0.25px;">ipumsi_00102</span>
<svg style="position:absolute;left:268px;top:808px" width="26" height="26"><circle cx="13" cy="12.7" r="9.6" fill="none" stroke="#6a6a6a" stroke-width="1.5"/><path d="M13 7.7 V17.7 M8 12.7 H18" stroke="#555" stroke-width="1.9"/></svg>
<div style="left:957px;top:815px;width:3px;height:3px;background:#a6a6a6;"></div>
<div style="left:957px;top:820px;width:3px;height:3px;background:#a6a6a6;"></div>
<div style="left:957px;top:825px;width:3px;height:3px;background:#a6a6a6;"></div>
<div style="left:1484px;top:812px;width:72px;height:17px;background:#f0f0f0;"></div>
<div style="left:975px;top:811px;width:19px;height:19px;background:#fff;box-sizing:border-box;border:1px solid #ababab"></div>
<div style="left:993px;top:811px;width:491px;height:19px;background:#fff;box-sizing:border-box;border:1px solid #ababab;border-left:2px solid #ababab"></div>
<div style="left:1556px;top:811px;width:19px;height:19px;background:#fff;box-sizing:border-box;border:1px solid #ababab"></div>
<svg style="position:absolute;left:975px;top:811px" width="600" height="19"><path d="M12 4.5 V14.5 L6.5 9.5 Z" fill="#222"/><path d="M589 4.5 V14.5 L594.5 9.5 Z" fill="#222"/></svg>
<div style="left:0px;top:835px;width:1599px;height:1px;background:#c8c8c8;"></div>
<div style="left:0px;top:836px;width:1599px;height:26px;background:#f3f3f3;"></div>
<span class="t" style="left:9px;top:841.56px;font-size:12.8px;line-height:16px;color:#333;font-weight:normal;letter-spacing:0px;">Ready</span>
<svg style="position:absolute;left:68px;top:840px" width="24" height="22"><g fill="none" stroke="#444" stroke-width="1.3"><path d="M7.5 4.2 A6.5 6.5 0 1 0 12.5 15.8" stroke-dasharray="3.2 1.6"/><path d="M9.5 1.5 V9 M7.3 6.8 L9.5 9 L11.7 6.8"/><path d="M9.5 7.5 H17.5 M15.3 5.3 L17.5 7.5 L15.3 9.7"/><path d="M12 10.5 L19.5 18 M19.5 10.5 L12 18" stroke-width="1.9"/></g></svg>
<span class="t" style="left:91px;top:841.56px;font-size:12.8px;line-height:16px;color:#333;font-weight:normal;letter-spacing:0px;">Accessibility: Investigate</span>
<div style="left:1228px;top:836px;width:50px;height:26px;background:#c8c8c8;"></div>
<svg style="position:absolute;left:1228px;top:836px" width="200" height="26"><g fill="none" stroke="#666" stroke-width="1"><rect x="17.5" y="5.5" width="15" height="15"/><path d="M17.5 10.5 H32.5 M17.5 15.5 H32.5 M22.5 5.5 V20.5 M27.5 5.5 V20.5"/><rect x="66.5" y="5.5" width="16" height="15"/><rect x="70.5" y="6.5" width="8" height="12"/><path d="M72 10.5 H77 M72 13.5 H77 M72 16.5 H77"/><rect x="116.5" y="5.5" width="16" height="15"/><path d="M116.5 14.5 H126.5 V5.5 M122.5 5.5 V14.5"/></g></svg>
<div style="left:1385px;top:848.5px;width:10px;height:1.5px;background:#444;"></div>
<div style="left:1401px;top:848.5px;width:125px;height:1.5px;background:#444;"></div>
<div style="left:1461px;top:842px;width:6px;height:14px;background:#444;"></div>
<div style="left:1532px;top:848px;width:9.5px;height:1.5px;background:#444;"></div>
<div style="left:1536px;top:844px;width:1.5px;height:9.5px;background:#444;"></div>
<span class="t" style="left:1559px;top:841.67px;font-size:12.5px;line-height:16px;color:#444;font-weight:normal;letter-spacing:-0.3px;">100%</span>
<div style="left:0px;top:862px;width:1599px;height:37px;background:#202020;"></div>
<div style="left:0px;top:862px;width:45px;height:37px;background:#1c1c1c;"></div>
<div style="left:45px;top:862px;width:322px;height:37px;background:#2e2e2e;"></div>
<div style="left:367px;top:862px;width:700px;height:37px;background:linear-gradient(90deg,#1e2b2b 0%,#1f2828 40%,#202020 100%);"></div>
<svg style="position:absolute;left:0;top:862px" width="45" height="37"><g fill="#fff"><path d="M12 11 L20.5 9.8 V17.8 H12Z"/><path d="M21.5 9.6 L32 8.2 V17.8 H21.5Z"/><path d="M12 18.8 H20.5 V26.8 L12 25.6Z"/><path d="M21.5 18.8 H32 V28.4 L21.5 27Z"/></g></svg>
<svg style="position:absolute;left:55px;top:862px" width="30" height="37"><g fill="none" stroke="#ddd" stroke-width="1.5"><circle cx="19" cy="15" r="6"/><path d="M14.5 19.5 L5.5 28.5"/></g></svg>
<span class="t" style="left:95px;top:871.61px;font-size:17px;line-height:21px;color:#d9d9d9;font-weight:normal;letter-spacing:0px;">Search</span>
<svg style="position:absolute;left:367px;top:862px" width="240" height="37"><g fill="none" stroke="#fff" stroke-width="1.3"><path d="M12 10 V12 H26 V10 M12 28 V26 H26 V28"/><rect x="13.5" y="14.5" width="11" height="9"/><path d="M31.5 10 V28"/></g><rect x="30" y="16" width="3" height="3" fill="#fff"/><path d="M62 11 H69 L71 13 H80 V26 H62 Z" fill="#e8b836"/><path d="M62 15 H80 V26 H62Z" fill="#f8d775"/><path d="M65 26 V20 H77 V26 H74 V23 H68 V26Z" fill="#2a8ad4"/><ellipse cx="118" cy="18" rx="10" ry="6.5" fill="none" stroke="#9aa3ab" stroke-width="3"/><text x="114" y="26" font-family="Liberation Sans" font-weight="bold" font-size="15" fill="#2168c4">R</text><circle cx="163" cy="18.5" r="10" fill="#db4437"/><path d="M163 18.5 L172 13.5 A10 10 0 0 1 157 27 Z" fill="#0f9d58"/><path d="M163 18.5 L157 27 A10 10 0 0 1 154 13.5 Z" fill="#ffcd40"/><circle cx="163" cy="18.5" r="4.6" fill="#fff"/><circle cx="163" cy="18.5" r="3.6" fill="#4285f4"/></svg>
<div style="left:555px;top:862px;width:45px;height:37px;background:#454a4a;"></div>
<svg style="position:absolute;left:553px;top:862px" width="50" height="37"><rect x="24" y="9" width="13" height="20" rx="1" fill="#21a366"/><rect x="24" y="15.5" width="13" height="7" fill="#107c41"/><rect x="24" y="22" width="13" height="7" fill="#185c37"/><rect x="13" y="12" width="14" height="14" rx="1.5" fill="#107c41"/><path d="M16 15 L24 23 M24 15 L16 23" stroke="#fff" stroke-width="2.2"/></svg>
<div style="left:422px;top:897px;width:35px;height:2px;background:#a9a2e0;"></div>
<div style="left:555px;top:897px;width:45px;height:2px;background:#a9a2e0;"></div>
<svg style="position:absolute;left:1150px;top:862px" width="449" height="37"><g fill="none" stroke="#eee" stroke-width="1.4"><rect x="13.5" y="9.5" width="28" height="19" rx="2"/><path d="M17 14 H38 M17 18 H25 V24 H17Z M28 19 H38 M28 22 H38"/><path d="M166 23 L173 16 L180 23"/><circle cx="202" cy="18.5" r="9"/><path d="M193 18.5 H211 M202 9.5 Q196 18.5 202 27.5 M202 9.5 Q208 18.5 202 27.5"/><rect x="225.5" y="13.5" width="17" height="10"/><rect x="253.5" y="11.5" width="28" height="15"/><path d="M258 16 H277 M258 19.5 H277 M262 23 H273" stroke-dasharray="2 1.5"/></g><circle cx="237.5" cy="23.5" r="5.5" fill="#1e8c3a"/><path d="M237.5 19.5 Q240.5 22 237.5 27 Q234.5 22 237.5 19.5Z" fill="#fff"/><circle cx="208" cy="24" r="4.8" fill="#202020"/><circle cx="208" cy="24" r="3.6" fill="none" stroke="#eee" stroke-width="1.2"/><path d="M205.5 26.5 L210.5 21.5" stroke="#eee" stroke-width="1.2"/><rect x="227" y="15" width="6" height="7" fill="#eee"/><path d="M399 9.5 H418 V24 H411 L407 28 V24 H399Z" fill="#fff"/><path d="M403 14 H414 M403 17 H414 M403 20 H411" stroke="#333" stroke-width="1"/><rect x="445" y="0" width="1" height="37" fill="#555"/></svg>
<span class="t" style="left:1203px;top:871.61px;font-size:17px;line-height:21px;color:#eee;font-weight:normal;letter-spacing:0px;">29°C&nbsp; Clear</span>
<span class="t" style="left:1446px;top:873.30px;font-size:15px;line-height:19px;color:#eee;font-weight:normal;letter-spacing:0px;">ENG</span>
<span class="t" style="left:1491px;top:873.30px;font-size:15px;line-height:19px;color:#eee;font-weight:normal;letter-spacing:0px;">14:06</span>
</body></html>
